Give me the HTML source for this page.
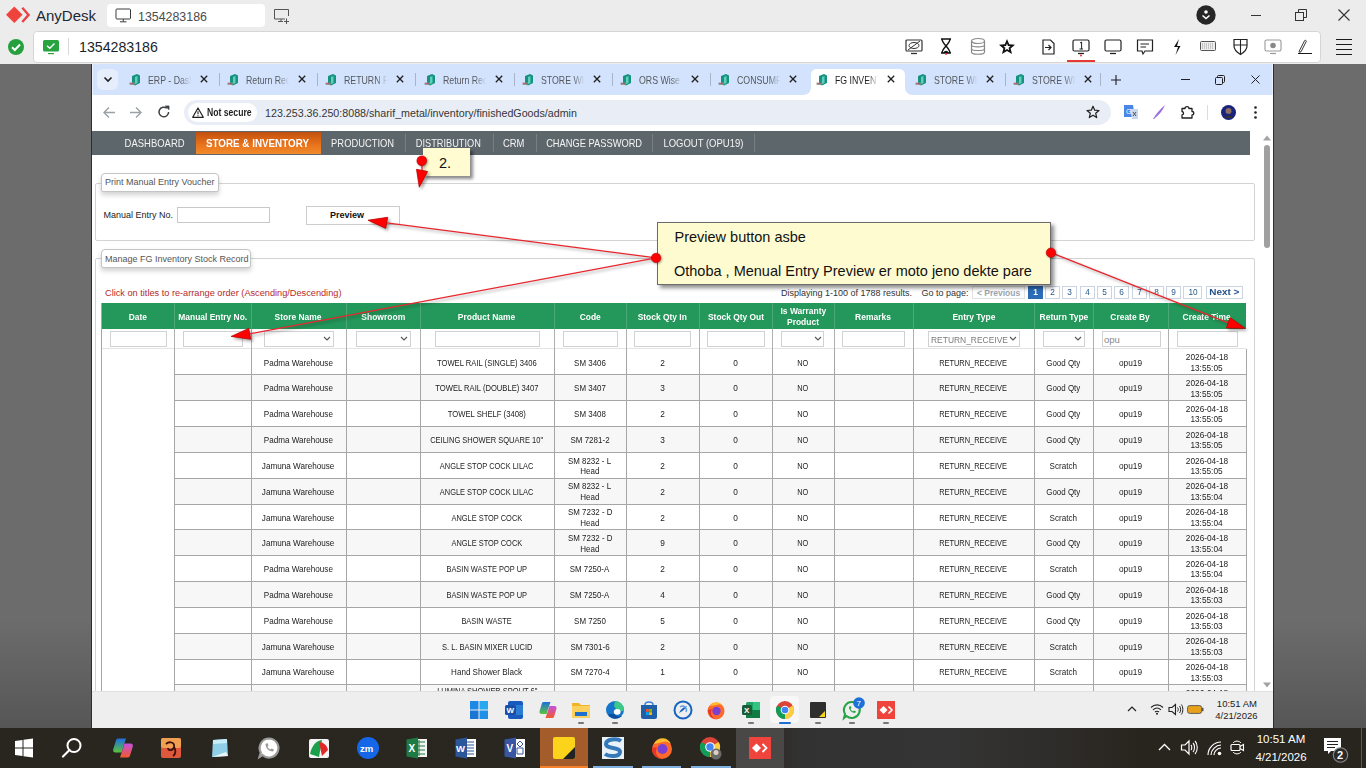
<!DOCTYPE html>
<html><head><meta charset="utf-8"><style>
*{box-sizing:border-box}
html,body{margin:0;padding:0}
body{width:1366px;height:768px;overflow:hidden;position:relative;background:linear-gradient(#6c6c6c 0,#6c6c6c 620px,#5e5e5e 690px,#565656 728px,#29261f 728px);font-family:"Liberation Sans",sans-serif;color:#222}
.a{position:absolute}
.t{position:absolute;white-space:nowrap;line-height:1}
svg{position:absolute;overflow:visible}
</style></head><body>
<div class="a" style="left:0px;top:0px;width:1366px;height:64px;background:#ececec"></div>
<svg style="left:5px;top:5px;" width="28" height="20" viewBox="0 0 28 20"><path d="M1 9.7 L9.3 1.4 L17.6 9.7 L9.3 18 Z" fill="#ef443b"/><path d="M17.3 2.8 L23.6 9.9 L17.3 17" fill="none" stroke="#e8434a" stroke-width="2.4"/></svg>
<div class="t" style="left:36px;top:7px;font-size:15px;color:#1d2736;line-height:17px">AnyDesk</div>
<div class="a" style="left:107px;top:4px;width:158px;height:23px;background:#fff;border-radius:4px"></div>
<svg style="left:115px;top:8px;" width="17" height="15" viewBox="0 0 17 15"><rect x="1" y="1" width="14.5" height="10" rx="1" fill="none" stroke="#3a3a3a" stroke-width="1"/><path d="M8.25 11 V13.5 M5 13.8 H11.5" stroke="#3a3a3a" stroke-width="1"/></svg>
<div class="t" style="left:138px;top:11px;font-size:12.4px;color:#4a4a4a;line-height:13px">1354283186</div>
<svg style="left:273px;top:8px;" width="17" height="16" viewBox="0 0 17 16"><path d="M12 11 H1.5 V1.5 H15.5 V8" fill="none" stroke="#555" stroke-width="1"/><path d="M8 11 V13.5 M5 13.5 H10 M11 13.5 h5 M13.5 10.5 v5.5" stroke="#555" stroke-width="1"/></svg>
<svg style="left:1196px;top:5px;" width="20" height="20" viewBox="0 0 20 20"><circle cx="10" cy="10" r="9.7" fill="#262626"/><circle cx="10" cy="7" r="1.8" fill="#fff"/><path d="M6.5 10.5 L10 13.5 L13.5 10.5" fill="none" stroke="#fff" stroke-width="1.6"/></svg>
<div class="a" style="left:1251px;top:15px;width:10px;height:1px;background:#333"></div>
<svg style="left:1295px;top:9px;" width="12" height="12" viewBox="0 0 12 12"><rect x="0.5" y="3.5" width="8" height="8" fill="none" stroke="#333"/><path d="M3.5 3.5 V0.5 H11.5 V8.5 H8.5" fill="none" stroke="#333"/></svg>
<svg style="left:1338px;top:9px;" width="12" height="12" viewBox="0 0 12 12"><path d="M0.5 0.5 L11.5 11.5 M11.5 0.5 L0.5 11.5" stroke="#333" stroke-width="1.1"/></svg>
<div class="a" style="left:33px;top:31px;width:1288px;height:32px;background:#fff;border:1px solid #d6d6d6;border-radius:4px"></div>
<svg style="left:8px;top:39px;" width="16" height="16" viewBox="0 0 16 16"><circle cx="8" cy="8" r="8" fill="#26a03d"/><path d="M4 8.3 L6.8 11 L12 5.5" fill="none" stroke="#fff" stroke-width="2"/></svg>
<svg style="left:43px;top:40px;" width="16" height="15" viewBox="0 0 16 15"><rect x="0" y="0" width="16" height="11.5" rx="1.5" fill="#27a33f"/><path d="M4 5.8 L6.8 8.3 L11.5 3.5" fill="none" stroke="#fff" stroke-width="1.4"/><rect x="5" y="13" width="6" height="1.2" fill="#27a33f"/></svg>
<div class="a" style="left:68px;top:38px;width:1px;height:17px;background:#d8d8d8"></div>
<div class="t" style="left:79px;top:40px;font-size:14.2px;color:#1a1f2b;line-height:15px">1354283186</div>
<svg style="left:905px;top:39px;" width="18" height="16" viewBox="0 0 18 16"><rect x="1" y="1" width="16" height="11" rx="1" fill="none" stroke="#333" stroke-width="1.2"/><ellipse cx="9" cy="6.5" rx="5" ry="3" fill="none" stroke="#333" stroke-width="1"/><path d="M3 11 L15 2" stroke="#333" stroke-width="1"/><path d="M6 14.5 H12" stroke="#333" stroke-width="1.3"/></svg>
<svg style="left:940px;top:38px;" width="12" height="17" viewBox="0 0 12 17"><path d="M1 1 H11 M1 15 H11 M2 1 C2 6 10 10 10 15 M10 1 C10 6 2 10 2 15" fill="none" stroke="#111" stroke-width="1.4"/><path d="M3 15 C5 12 7 12 9 15 Z" fill="#111"/><circle cx="6" cy="16" r="1" fill="#e33"/></svg>
<svg style="left:970px;top:38px;" width="16" height="18" viewBox="0 0 16 18"><ellipse cx="8" cy="3" rx="6.5" ry="2.5" fill="none" stroke="#888" stroke-width="1.2"/><path d="M1.5 3 V14 C1.5 17 14.5 17 14.5 14 V3 M1.5 6.7 C1.5 9.5 14.5 9.5 14.5 6.7 M1.5 10.4 C1.5 13.2 14.5 13.2 14.5 10.4" fill="none" stroke="#888" stroke-width="1.2"/></svg>
<svg style="left:998px;top:38px;" width="18" height="17" viewBox="0 0 18 17"><path d="M9 1 L11.2 6.3 L17 6.8 L12.6 10.5 L14 16 L9 13 L4 16 L5.4 10.5 L1 6.8 L6.8 6.3 Z" fill="#111"/><path d="M9 5.5 L10 8 L12.5 8.2 L10.6 9.8 L11.2 12.2 L9 10.9 L6.8 12.2 L7.4 9.8 L5.5 8.2 L8 8 Z" fill="#fff"/></svg>
<svg style="left:1042px;top:39px;" width="13" height="16" viewBox="0 0 13 16"><path d="M1 1 H8.5 L12 4.5 V15 H1 Z" fill="none" stroke="#222" stroke-width="1.2"/><path d="M3 8.5 H9 M6.5 6 L9 8.5 L6.5 11" fill="none" stroke="#222" stroke-width="1.2"/></svg>
<svg style="left:1072px;top:39px;" width="18" height="17" viewBox="0 0 18 17"><rect x="1" y="1" width="16" height="11" rx="1.5" fill="none" stroke="#222" stroke-width="1.2"/><path d="M8 4 L9.6 3 V10 M7.5 10 H11" fill="none" stroke="#222" stroke-width="1"/><path d="M6 14.5 H12" stroke="#222" stroke-width="1.3"/><circle cx="9" cy="16.5" r="1" fill="#e33"/></svg>
<div class="a" style="left:1067px;top:60px;width:28px;height:2px;background:#e53935"></div>
<svg style="left:1104px;top:39px;" width="18" height="16" viewBox="0 0 18 16"><rect x="1" y="1" width="16" height="11" rx="1.5" fill="none" stroke="#222" stroke-width="1.2"/><path d="M6 14.5 H12" stroke="#222" stroke-width="1.3"/></svg>
<svg style="left:1136px;top:39px;" width="18" height="17" viewBox="0 0 18 17"><path d="M1.5 1 H16.5 V12 H9 L7 15 L6 12 H1.5 Z" fill="none" stroke="#222" stroke-width="1.2"/><path d="M4.5 5 H13 M4.5 8 H10" stroke="#222" stroke-width="1.2"/></svg>
<svg style="left:1171px;top:38px;" width="12" height="18" viewBox="0 0 12 18"><path d="M8 1 L3 9 H7 L4.5 17 L9.5 8 H6 Z" fill="#111"/></svg>
<svg style="left:1200px;top:41px;" width="16" height="10" viewBox="0 0 16 10"><rect x="0.5" y="0.5" width="15" height="9" rx="1" fill="#eee" stroke="#555" stroke-width="1"/><path d="M2 3 H14 M2 5 H14 M2 7 H14" stroke="#888" stroke-width="0.8" stroke-dasharray="1 1"/></svg>
<svg style="left:1233px;top:38px;" width="15" height="17" viewBox="0 0 15 17"><path d="M1 1.5 H14 V8 C14 12 10 15 7.5 16.5 C5 15 1 12 1 8 Z" fill="none" stroke="#222" stroke-width="1.2"/><path d="M7.5 1.5 V16 M1 7 H14" stroke="#222" stroke-width="1.1"/></svg>
<svg style="left:1264px;top:39px;" width="18" height="16" viewBox="0 0 18 16"><rect x="1" y="1" width="16" height="11" rx="1.5" fill="none" stroke="#999" stroke-width="1.1"/><circle cx="9" cy="6.5" r="2.8" fill="#888"/><path d="M6 14.5 H12" stroke="#999" stroke-width="1.2"/></svg>
<svg style="left:1296px;top:38px;" width="18" height="17" viewBox="0 0 18 17"><path d="M3.2 13.2 L8.6 2.6 C9 1.9 10.6 2.5 10.3 3.3 L5 13.8 L3.3 14.3 Z" fill="none" stroke="#222" stroke-width="0.9"/></svg>
<div class="a" style="left:1298px;top:53px;width:14px;height:1px;background:#1a1a1a"></div>
<div class="a" style="left:1336px;top:39px;width:16px;height:1px;background:#1a1a1a"></div>
<div class="a" style="left:1336px;top:44px;width:16px;height:1px;background:#1a1a1a"></div>
<div class="a" style="left:1336px;top:49px;width:16px;height:1px;background:#1a1a1a"></div>
<div class="a" style="left:1336px;top:54px;width:16px;height:1px;background:#1a1a1a"></div>
<div class="a" style="left:91px;top:64px;width:1px;height:664px;background:#2b2f33"></div>
<div class="a" style="left:1273px;top:64px;width:1px;height:664px;background:#2b2f33"></div>
<div class="a" style="left:92px;top:64px;width:1181px;height:31px;background:#d3e3fd"></div>
<div class="a" style="left:92px;top:95px;width:1181px;height:36px;background:#fff"></div>
<div class="a" style="left:92px;top:131px;width:1181px;height:560px;background:#fff"></div>
<div class="a" style="left:97px;top:69px;width:21px;height:21px;background:#e6eefc;border-radius:6px"></div>
<svg style="left:103px;top:76px;" width="10" height="7" viewBox="0 0 10 7"><path d="M1.5 1.5 L5 5 L8.5 1.5" fill="none" stroke="#1f1f1f" stroke-width="1.6"/></svg>
<svg style="left:129.0px;top:73px;" width="12" height="13" viewBox="0 0 12 13"><path d="M3 3 L8 1 L11 2.5 V10 L6 12.5 L3 11 Z" fill="#16927f"/><path d="M6 4 L8.5 3 V10 L6 11 Z" fill="#5fd0bb"/><path d="M0.5 9.5 H6 V12 H0.5 Z" fill="#8a8a8a" opacity="0.8"/><path d="M1 10.5 H5" stroke="#c44" stroke-width="0.6"/></svg>
<div class="t" style="left:148.0px;top:75px;font-size:10.2px;color:#55595e;line-height:11px;width:52px;overflow:hidden;transform:scaleX(0.86);transform-origin:0 0;-webkit-mask-image:linear-gradient(90deg,#000 72%,transparent 97%)">ERP - Dash</div>
<svg style="left:200.0px;top:75px;" width="8" height="8" viewBox="0 0 8 8"><path d="M0.8 0.8 L7.2 7.2 M7.2 0.8 L0.8 7.2" stroke="#1f1f1f" stroke-width="1.3"/></svg>
<div class="a" style="left:219px;top:73px;width:1px;height:13px;background:#a8b4c8"></div>
<svg style="left:227.2px;top:73px;" width="12" height="13" viewBox="0 0 12 13"><path d="M3 3 L8 1 L11 2.5 V10 L6 12.5 L3 11 Z" fill="#16927f"/><path d="M6 4 L8.5 3 V10 L6 11 Z" fill="#5fd0bb"/><path d="M0.5 9.5 H6 V12 H0.5 Z" fill="#8a8a8a" opacity="0.8"/><path d="M1 10.5 H5" stroke="#c44" stroke-width="0.6"/></svg>
<div class="t" style="left:246.2px;top:75px;font-size:10.2px;color:#55595e;line-height:11px;width:52px;overflow:hidden;transform:scaleX(0.86);transform-origin:0 0;-webkit-mask-image:linear-gradient(90deg,#000 72%,transparent 97%)">Return Rec</div>
<svg style="left:298.2px;top:75px;" width="8" height="8" viewBox="0 0 8 8"><path d="M0.8 0.8 L7.2 7.2 M7.2 0.8 L0.8 7.2" stroke="#1f1f1f" stroke-width="1.3"/></svg>
<div class="a" style="left:317px;top:73px;width:1px;height:13px;background:#a8b4c8"></div>
<svg style="left:325.4px;top:73px;" width="12" height="13" viewBox="0 0 12 13"><path d="M3 3 L8 1 L11 2.5 V10 L6 12.5 L3 11 Z" fill="#16927f"/><path d="M6 4 L8.5 3 V10 L6 11 Z" fill="#5fd0bb"/><path d="M0.5 9.5 H6 V12 H0.5 Z" fill="#8a8a8a" opacity="0.8"/><path d="M1 10.5 H5" stroke="#c44" stroke-width="0.6"/></svg>
<div class="t" style="left:344.4px;top:75px;font-size:10.2px;color:#55595e;line-height:11px;width:52px;overflow:hidden;transform:scaleX(0.86);transform-origin:0 0;-webkit-mask-image:linear-gradient(90deg,#000 72%,transparent 97%)">RETURN R</div>
<svg style="left:396.4px;top:75px;" width="8" height="8" viewBox="0 0 8 8"><path d="M0.8 0.8 L7.2 7.2 M7.2 0.8 L0.8 7.2" stroke="#1f1f1f" stroke-width="1.3"/></svg>
<div class="a" style="left:415px;top:73px;width:1px;height:13px;background:#a8b4c8"></div>
<svg style="left:423.6px;top:73px;" width="12" height="13" viewBox="0 0 12 13"><path d="M3 3 L8 1 L11 2.5 V10 L6 12.5 L3 11 Z" fill="#16927f"/><path d="M6 4 L8.5 3 V10 L6 11 Z" fill="#5fd0bb"/><path d="M0.5 9.5 H6 V12 H0.5 Z" fill="#8a8a8a" opacity="0.8"/><path d="M1 10.5 H5" stroke="#c44" stroke-width="0.6"/></svg>
<div class="t" style="left:442.6px;top:75px;font-size:10.2px;color:#55595e;line-height:11px;width:52px;overflow:hidden;transform:scaleX(0.86);transform-origin:0 0;-webkit-mask-image:linear-gradient(90deg,#000 72%,transparent 97%)">Return Rec</div>
<svg style="left:494.6px;top:75px;" width="8" height="8" viewBox="0 0 8 8"><path d="M0.8 0.8 L7.2 7.2 M7.2 0.8 L0.8 7.2" stroke="#1f1f1f" stroke-width="1.3"/></svg>
<div class="a" style="left:514px;top:73px;width:1px;height:13px;background:#a8b4c8"></div>
<svg style="left:521.8px;top:73px;" width="12" height="13" viewBox="0 0 12 13"><path d="M3 3 L8 1 L11 2.5 V10 L6 12.5 L3 11 Z" fill="#16927f"/><path d="M6 4 L8.5 3 V10 L6 11 Z" fill="#5fd0bb"/><path d="M0.5 9.5 H6 V12 H0.5 Z" fill="#8a8a8a" opacity="0.8"/><path d="M1 10.5 H5" stroke="#c44" stroke-width="0.6"/></svg>
<div class="t" style="left:540.8px;top:75px;font-size:10.2px;color:#55595e;line-height:11px;width:52px;overflow:hidden;transform:scaleX(0.86);transform-origin:0 0;-webkit-mask-image:linear-gradient(90deg,#000 72%,transparent 97%)">STORE WIS</div>
<svg style="left:592.8px;top:75px;" width="8" height="8" viewBox="0 0 8 8"><path d="M0.8 0.8 L7.2 7.2 M7.2 0.8 L0.8 7.2" stroke="#1f1f1f" stroke-width="1.3"/></svg>
<div class="a" style="left:612px;top:73px;width:1px;height:13px;background:#a8b4c8"></div>
<svg style="left:620.0px;top:73px;" width="12" height="13" viewBox="0 0 12 13"><path d="M3 3 L8 1 L11 2.5 V10 L6 12.5 L3 11 Z" fill="#16927f"/><path d="M6 4 L8.5 3 V10 L6 11 Z" fill="#5fd0bb"/><path d="M0.5 9.5 H6 V12 H0.5 Z" fill="#8a8a8a" opacity="0.8"/><path d="M1 10.5 H5" stroke="#c44" stroke-width="0.6"/></svg>
<div class="t" style="left:639.0px;top:75px;font-size:10.2px;color:#55595e;line-height:11px;width:52px;overflow:hidden;transform:scaleX(0.86);transform-origin:0 0;-webkit-mask-image:linear-gradient(90deg,#000 72%,transparent 97%)">ORS Wise</div>
<svg style="left:691.0px;top:75px;" width="8" height="8" viewBox="0 0 8 8"><path d="M0.8 0.8 L7.2 7.2 M7.2 0.8 L0.8 7.2" stroke="#1f1f1f" stroke-width="1.3"/></svg>
<div class="a" style="left:710px;top:73px;width:1px;height:13px;background:#a8b4c8"></div>
<svg style="left:718.2px;top:73px;" width="12" height="13" viewBox="0 0 12 13"><path d="M3 3 L8 1 L11 2.5 V10 L6 12.5 L3 11 Z" fill="#16927f"/><path d="M6 4 L8.5 3 V10 L6 11 Z" fill="#5fd0bb"/><path d="M0.5 9.5 H6 V12 H0.5 Z" fill="#8a8a8a" opacity="0.8"/><path d="M1 10.5 H5" stroke="#c44" stroke-width="0.6"/></svg>
<div class="t" style="left:737.2px;top:75px;font-size:10.2px;color:#55595e;line-height:11px;width:52px;overflow:hidden;transform:scaleX(0.86);transform-origin:0 0;-webkit-mask-image:linear-gradient(90deg,#000 72%,transparent 97%)">CONSUMP</div>
<svg style="left:789.2px;top:75px;" width="8" height="8" viewBox="0 0 8 8"><path d="M0.8 0.8 L7.2 7.2 M7.2 0.8 L0.8 7.2" stroke="#1f1f1f" stroke-width="1.3"/></svg>
<svg style="left:803.4px;top:69px;" width="110" height="26" viewBox="0 0 110 26"><path d="M0 26 C5 26 8 23 8 18 V6 C8 2.5 10.5 0 14 0 H96 C99.5 0 102 2.5 102 6 V18 C102 23 105 26 110 26 Z" fill="#fff"/></svg>
<svg style="left:816.4px;top:73px;" width="12" height="13" viewBox="0 0 12 13"><path d="M3 3 L8 1 L11 2.5 V10 L6 12.5 L3 11 Z" fill="#16927f"/><path d="M6 4 L8.5 3 V10 L6 11 Z" fill="#5fd0bb"/><path d="M0.5 9.5 H6 V12 H0.5 Z" fill="#8a8a8a" opacity="0.8"/><path d="M1 10.5 H5" stroke="#c44" stroke-width="0.6"/></svg>
<div class="t" style="left:835.4px;top:75px;font-size:10.2px;color:#1f1f1f;line-height:11px;width:52px;overflow:hidden;transform:scaleX(0.86);transform-origin:0 0;-webkit-mask-image:linear-gradient(90deg,#000 72%,transparent 97%)">FG INVENT</div>
<svg style="left:887.4px;top:75px;" width="8" height="8" viewBox="0 0 8 8"><path d="M0.8 0.8 L7.2 7.2 M7.2 0.8 L0.8 7.2" stroke="#1f1f1f" stroke-width="1.3"/></svg>
<svg style="left:914.6px;top:73px;" width="12" height="13" viewBox="0 0 12 13"><path d="M3 3 L8 1 L11 2.5 V10 L6 12.5 L3 11 Z" fill="#16927f"/><path d="M6 4 L8.5 3 V10 L6 11 Z" fill="#5fd0bb"/><path d="M0.5 9.5 H6 V12 H0.5 Z" fill="#8a8a8a" opacity="0.8"/><path d="M1 10.5 H5" stroke="#c44" stroke-width="0.6"/></svg>
<div class="t" style="left:933.6px;top:75px;font-size:10.2px;color:#55595e;line-height:11px;width:52px;overflow:hidden;transform:scaleX(0.86);transform-origin:0 0;-webkit-mask-image:linear-gradient(90deg,#000 72%,transparent 97%)">STORE WIS</div>
<svg style="left:985.6px;top:75px;" width="8" height="8" viewBox="0 0 8 8"><path d="M0.8 0.8 L7.2 7.2 M7.2 0.8 L0.8 7.2" stroke="#1f1f1f" stroke-width="1.3"/></svg>
<div class="a" style="left:1005px;top:73px;width:1px;height:13px;background:#a8b4c8"></div>
<svg style="left:1012.8000000000001px;top:73px;" width="12" height="13" viewBox="0 0 12 13"><path d="M3 3 L8 1 L11 2.5 V10 L6 12.5 L3 11 Z" fill="#16927f"/><path d="M6 4 L8.5 3 V10 L6 11 Z" fill="#5fd0bb"/><path d="M0.5 9.5 H6 V12 H0.5 Z" fill="#8a8a8a" opacity="0.8"/><path d="M1 10.5 H5" stroke="#c44" stroke-width="0.6"/></svg>
<div class="t" style="left:1031.8000000000002px;top:75px;font-size:10.2px;color:#55595e;line-height:11px;width:52px;overflow:hidden;transform:scaleX(0.86);transform-origin:0 0;-webkit-mask-image:linear-gradient(90deg,#000 72%,transparent 97%)">STORE WIS</div>
<svg style="left:1083.8000000000002px;top:75px;" width="8" height="8" viewBox="0 0 8 8"><path d="M0.8 0.8 L7.2 7.2 M7.2 0.8 L0.8 7.2" stroke="#1f1f1f" stroke-width="1.3"/></svg>
<div class="a" style="left:1100px;top:73px;width:1px;height:13px;background:#a8b4c8"></div>
<svg style="left:1111px;top:75px;" width="10" height="10" viewBox="0 0 10 10"><path d="M5 0 V10 M0 5 H10" stroke="#1f1f1f" stroke-width="1.1"/></svg>
<div class="a" style="left:1180.5px;top:78.5px;width:9.5px;height:1px;background:#1f1f1f"></div>
<svg style="left:1215px;top:74.5px;" width="10" height="10" viewBox="0 0 10 10"><rect x="0.5" y="2.5" width="7" height="7" rx="1" fill="none" stroke="#1f1f1f" stroke-width="1"/><path d="M2.5 2.5 V1.5 C2.5 0.9 2.9 0.5 3.5 0.5 H8.5 C9.1 0.5 9.5 0.9 9.5 1.5 V6.5 C9.5 7.1 9.1 7.5 8.5 7.5 H7.5" fill="none" stroke="#1f1f1f" stroke-width="1"/></svg>
<svg style="left:1251px;top:74.5px;" width="9" height="9" viewBox="0 0 9 9"><path d="M0.5 0.5 L8.5 8.5 M8.5 0.5 L0.5 8.5" stroke="#1f1f1f" stroke-width="1"/></svg>
<div class="a" style="left:92px;top:64px;width:1px;height:31px;background:#eaf1fd"></div>
<div class="a" style="left:1272px;top:64px;width:1px;height:31px;background:#eaf1fd"></div>
<div class="a" style="left:92px;top:95px;width:1181px;height:36px;background:#fff"></div>
<svg style="left:102px;top:106px;" width="14" height="13" viewBox="0 0 14 13"><path d="M13 6.5 H2 M7 1.5 L2 6.5 L7 11.5" fill="none" stroke="#9aa0a6" stroke-width="1.4"/></svg>
<svg style="left:129px;top:106px;" width="14" height="13" viewBox="0 0 14 13"><path d="M1 6.5 H12 M7 1.5 L12 6.5 L7 11.5" fill="none" stroke="#9aa0a6" stroke-width="1.4"/></svg>
<svg style="left:157px;top:105px;" width="14" height="14" viewBox="0 0 14 14"><path d="M11.6 7 A4.8 4.8 0 1 1 9.8 3.2" fill="none" stroke="#3c4043" stroke-width="1.5"/><path d="M8.4 1 H12 V4.6 Z" fill="#3c4043" stroke="#3c4043" stroke-width="0.8"/></svg>
<div class="a" style="left:184px;top:100px;width:927px;height:25px;background:#e9eef6;border-radius:12.5px"></div>
<div class="a" style="left:188px;top:103px;width:69px;height:19px;background:#fff;border-radius:9.5px"></div>
<svg style="left:192px;top:107px;" width="12" height="11" viewBox="0 0 12 11"><path d="M6 1 L11.3 10.3 H0.7 Z" fill="none" stroke="#1f1f1f" stroke-width="1.2" stroke-linejoin="round"/><path d="M6 4.2 V7.2 M6 8.3 V9.2" stroke="#1f1f1f" stroke-width="1.1"/></svg>
<div class="t" style="left:207px;top:107px;font-size:10.4px;color:#1f1f1f;font-weight:bold;line-height:12px;transform:scaleX(0.83);transform-origin:0 0">Not secure</div>
<div class="t" style="left:265px;top:106.5px;font-size:10.7px;color:#363636;line-height:13px">123.253.36.250:8088/sharif_metal/inventory/finishedGoods/admin</div>
<svg style="left:1086px;top:105px;" width="14" height="14" viewBox="0 0 14 14"><path d="M7 1.2 L8.7 5.2 L13 5.5 L9.7 8.3 L10.7 12.6 L7 10.3 L3.3 12.6 L4.3 8.3 L1 5.5 L5.3 5.2 Z" fill="none" stroke="#1f1f1f" stroke-width="1.2" stroke-linejoin="round"/></svg>
<svg style="left:1123px;top:104px;" width="16" height="16" viewBox="0 0 16 16"><path d="M1 1 H10 L12 13 H1 Z" fill="#4a86e8"/><path d="M7 5 H15 V15 H9 Z" fill="#c8d6ee"/><text x="3" y="10" font-size="7" fill="#fff" font-family="Liberation Sans">G</text><path d="M10 8 L13 12 M13 8 L10 12" stroke="#555" stroke-width="1"/></svg>
<svg style="left:1152px;top:104px;" width="14" height="16" viewBox="0 0 14 16"><path d="M1 15 C4 10 8 5 13 1 C11 6 7 11 2 15 Z" fill="#9a6ee0"/></svg>
<svg style="left:1180px;top:105px;" width="15" height="14" viewBox="0 0 15 14"><path d="M2 3.5 H5 C5 1 9 1 9 3.5 H12 V6.5 C14.5 6.5 14.5 10 12 10 V13 H2 V10 C4 10 4 6.5 2 6.5 Z" fill="none" stroke="#1f1f1f" stroke-width="1.3" stroke-linejoin="round"/></svg>
<div class="a" style="left:1207px;top:105px;width:1px;height:15px;background:#dadce0"></div>
<svg style="left:1221px;top:105px;" width="15" height="15" viewBox="0 0 15 15"><circle cx="7.5" cy="7.5" r="7.5" fill="#1a237e"/><circle cx="7.5" cy="6" r="3" fill="#8d6e63"/><path d="M3 13 C4 9.5 11 9.5 12 13 Z" fill="#333"/></svg>
<svg style="left:1254px;top:106px;" width="3" height="13" viewBox="0 0 3 13"><circle cx="1.5" cy="1.5" r="1.3" fill="#1f1f1f"/><circle cx="1.5" cy="6.5" r="1.3" fill="#1f1f1f"/><circle cx="1.5" cy="11.5" r="1.3" fill="#1f1f1f"/></svg>
<div class="a" style="left:92px;top:131px;width:1158px;height:24px;background:#5d666b"></div>
<div class="a" style="left:196px;top:132px;width:125px;height:22px;background:linear-gradient(#c2500e,#e9741c 60%,#f08a2a)"></div>
<div class="t" style="left:122.38px;top:139.25px;width:65.25px;font-size:10.3px;line-height:10.3px;color:#f4f4f4;transform:scaleX(0.920);transform-origin:50% 50%">DASHBOARD</div>
<div class="t" style="left:327.88px;top:139.25px;width:69.24px;font-size:10.3px;line-height:10.3px;color:#f4f4f4;transform:scaleX(0.910);transform-origin:50% 50%">PRODUCTION</div>
<div class="t" style="left:412.36px;top:139.25px;width:72.67px;font-size:10.3px;line-height:10.3px;color:#f4f4f4;transform:scaleX(0.894);transform-origin:50% 50%">DISTRIBUTION</div>
<div class="t" style="left:502.27px;top:139.25px;width:23.46px;font-size:10.3px;line-height:10.3px;color:#f4f4f4;transform:scaleX(0.917);transform-origin:50% 50%">CRM</div>
<div class="t" style="left:541.37px;top:139.25px;width:106.26px;font-size:10.3px;line-height:10.3px;color:#f4f4f4;transform:scaleX(0.903);transform-origin:50% 50%">CHANGE PASSWORD</div>
<div class="t" style="left:659.90px;top:139.25px;width:86.80px;font-size:10.3px;line-height:10.3px;color:#f4f4f4;transform:scaleX(0.922);transform-origin:50% 50%">LOGOUT (OPU19)</div>
<div class="t" style="left:202.99px;top:139.30px;width:109.03px;font-size:10.4px;line-height:10.4px;color:#fff;font-weight:bold;transform:scaleX(0.945);transform-origin:50% 50%">STORE &amp; INVENTORY</div>
<div class="a" style="left:404.7px;top:134px;width:1px;height:18px;background:#768085"></div>
<div class="a" style="left:493px;top:134px;width:1px;height:18px;background:#768085"></div>
<div class="a" style="left:535.6px;top:134px;width:1px;height:18px;background:#768085"></div>
<div class="a" style="left:652.4px;top:134px;width:1px;height:18px;background:#768085"></div>
<div class="a" style="left:753.7px;top:134px;width:1px;height:18px;background:#768085"></div>
<div class="a" style="left:94.5px;top:182.5px;width:1160px;height:58px;border:1px solid #d3d3d3;border-radius:2px"></div>
<div class="a" style="left:101px;top:172.5px;width:118px;height:19px;background:#fff;border:1px solid #c4c4c4;border-radius:4px 4px 2px 2px;box-shadow:0 3px 5px rgba(0,0,0,0.18)"></div>
<div class="t" style="left:105px;top:177px;font-size:9px;color:#555;line-height:10px">Print Manual Entry Voucher</div>
<div class="t" style="left:103.5px;top:210px;font-size:9px;color:#222;line-height:10px">Manual Entry No.</div>
<div class="a" style="left:176.5px;top:206.5px;width:93px;height:16px;border:1px solid #c8c8c8;background:#fff"></div>
<div class="a" style="left:306px;top:205.5px;width:94px;height:19px;border:1px solid #cdcdcd;background:#fff"></div>
<div class="t" style="left:330px;top:210px;font-size:9px;color:#111;font-weight:bold;line-height:10px">Preview</div>
<div class="a" style="left:94.5px;top:257.6px;width:1160px;height:500px;border:1px solid #d3d3d3;border-radius:2px"></div>
<div class="a" style="left:101px;top:249px;width:150px;height:19px;background:#fff;border:1px solid #c4c4c4;border-radius:4px 4px 2px 2px;box-shadow:0 3px 5px rgba(0,0,0,0.18)"></div>
<div class="t" style="left:105px;top:253.5px;font-size:9px;color:#555;line-height:10px">Manage FG Inventory Stock Record</div>
<div class="t" style="left:105px;top:287.5px;font-size:9.2px;color:#b52a2a;line-height:10px">Click on titles to re-arrange order (Ascending/Descending)</div>
<div class="t" style="left:781px;top:288px;font-size:9px;color:#333;line-height:10px">Displaying 1-100 of 1788 results.</div>
<div class="t" style="left:921.5px;top:288px;font-size:9px;color:#333;line-height:10px">Go to page:</div>
<div class="a" style="left:972px;top:286.3px;width:53px;height:13px;border:1px solid #e2e2e2;background:#fff"></div>
<div class="t" style="left:977px;top:288px;font-size:8.5px;color:#9aa;font-weight:bold;line-height:10px;color:#9aa5b1">&lt; Previous</div>
<div class="a" style="left:1027.5px;top:286.3px;width:15px;height:13px;background:#2c6bb5"></div>
<div class="t" style="left:1032.50px;top:288.00px;width:5.00px;font-size:9px;line-height:9px;color:#fff;font-weight:bold;transform:scaleX(0.920);transform-origin:50% 50%">1</div>
<div class="a" style="left:1045px;top:286.3px;width:15px;height:13px;border:1px solid #cbd5e1;background:#fff"></div>
<div class="t" style="left:1050.00px;top:288.00px;width:5.00px;font-size:9px;line-height:9px;color:#2a5a8a;transform:scaleX(0.920);transform-origin:50% 50%">2</div>
<div class="a" style="left:1062.3px;top:286.3px;width:15px;height:13px;border:1px solid #cbd5e1;background:#fff"></div>
<div class="t" style="left:1067.30px;top:288.00px;width:5.00px;font-size:9px;line-height:9px;color:#2a5a8a;transform:scaleX(0.920);transform-origin:50% 50%">3</div>
<div class="a" style="left:1079.6px;top:286.3px;width:15px;height:13px;border:1px solid #cbd5e1;background:#fff"></div>
<div class="t" style="left:1084.60px;top:288.00px;width:5.00px;font-size:9px;line-height:9px;color:#2a5a8a;transform:scaleX(0.920);transform-origin:50% 50%">4</div>
<div class="a" style="left:1096.9px;top:286.3px;width:15px;height:13px;border:1px solid #cbd5e1;background:#fff"></div>
<div class="t" style="left:1101.90px;top:288.00px;width:5.00px;font-size:9px;line-height:9px;color:#2a5a8a;transform:scaleX(0.920);transform-origin:50% 50%">5</div>
<div class="a" style="left:1114.2px;top:286.3px;width:15px;height:13px;border:1px solid #cbd5e1;background:#fff"></div>
<div class="t" style="left:1119.20px;top:288.00px;width:5.00px;font-size:9px;line-height:9px;color:#2a5a8a;transform:scaleX(0.920);transform-origin:50% 50%">6</div>
<div class="a" style="left:1131.5px;top:286.3px;width:15px;height:13px;border:1px solid #cbd5e1;background:#fff"></div>
<div class="t" style="left:1136.50px;top:288.00px;width:5.00px;font-size:9px;line-height:9px;color:#2a5a8a;transform:scaleX(0.920);transform-origin:50% 50%">7</div>
<div class="a" style="left:1148.8px;top:286.3px;width:15px;height:13px;border:1px solid #cbd5e1;background:#fff"></div>
<div class="t" style="left:1153.80px;top:288.00px;width:5.00px;font-size:9px;line-height:9px;color:#2a5a8a;transform:scaleX(0.920);transform-origin:50% 50%">8</div>
<div class="a" style="left:1166.1px;top:286.3px;width:15px;height:13px;border:1px solid #cbd5e1;background:#fff"></div>
<div class="t" style="left:1171.10px;top:288.00px;width:5.00px;font-size:9px;line-height:9px;color:#2a5a8a;transform:scaleX(0.920);transform-origin:50% 50%">9</div>
<div class="a" style="left:1183.4px;top:286.3px;width:19px;height:13px;border:1px solid #cbd5e1;background:#fff"></div>
<div class="t" style="left:1188.00px;top:288.00px;width:10.01px;font-size:9px;line-height:9px;color:#2a5a8a;transform:scaleX(0.920);transform-origin:50% 50%">10</div>
<div class="a" style="left:1205.7px;top:286.3px;width:37.5px;height:13px;border:1px solid #cbd5e1;background:#fff"></div>
<div class="t" style="left:1211.17px;top:288.10px;width:26.66px;font-size:8.8px;line-height:8.8px;color:#1f4f88;font-weight:bold;transform:scaleX(1.125);transform-origin:50% 50%">Next &gt;</div>
<div class="a" style="left:1255px;top:131px;width:18px;height:560px;background:#fff"></div>
<svg style="left:1262px;top:134px;" width="10" height="7" viewBox="0 0 10 7"><path d="M1 6.5 L5 1.5 L9 6.5 Z" fill="#a3a3a3"/></svg>
<div class="a" style="left:1264px;top:145px;width:6px;height:103px;background:#a0a0a0;border-radius:3px"></div>
<svg style="left:1262px;top:682px;" width="10" height="7" viewBox="0 0 10 7"><path d="M1 0.5 L5 5.5 L9 0.5 Z" fill="#a3a3a3"/></svg>
<div class="a" style="left:101px;top:303px;width:1145px;height:25.69999999999999px;background:#24985a"></div>
<div class="t" style="left:127.75px;top:312.50px;width:19.51px;font-size:9px;line-height:9px;color:#fff;font-weight:bold;transform:scaleX(0.933);transform-origin:50% 50%">Date</div>
<div class="t" style="left:175.75px;top:312.50px;width:73.50px;font-size:9px;line-height:9px;color:#fff;font-weight:bold;transform:scaleX(0.936);transform-origin:50% 50%">Manual Entry No.</div>
<div class="t" style="left:273.49px;top:312.50px;width:50.02px;font-size:9px;line-height:9px;color:#fff;font-weight:bold;transform:scaleX(0.938);transform-origin:50% 50%">Store Name</div>
<div class="t" style="left:359.75px;top:312.50px;width:46.50px;font-size:9px;line-height:9px;color:#fff;font-weight:bold;transform:scaleX(0.944);transform-origin:50% 50%">Showroom</div>
<div class="t" style="left:456.49px;top:312.50px;width:61.01px;font-size:9px;line-height:9px;color:#fff;font-weight:bold;transform:scaleX(0.940);transform-origin:50% 50%">Product Name</div>
<div class="t" style="left:578.75px;top:312.50px;width:22.50px;font-size:9px;line-height:9px;color:#fff;font-weight:bold;transform:scaleX(0.936);transform-origin:50% 50%">Code</div>
<div class="t" style="left:636.25px;top:312.50px;width:52.51px;font-size:9px;line-height:9px;color:#fff;font-weight:bold;transform:scaleX(0.935);transform-origin:50% 50%">Stock Qty In</div>
<div class="t" style="left:705.50px;top:312.50px;width:60.00px;font-size:9px;line-height:9px;color:#fff;font-weight:bold;transform:scaleX(0.933);transform-origin:50% 50%">Stock Qty Out</div>
<div class="t" style="left:778.66px;top:306.80px;width:48.68px;font-size:9px;line-height:9px;color:#fff;font-weight:bold;transform:scaleX(0.939);transform-origin:50% 50%">Is Warranty</div>
<div class="t" style="left:786.00px;top:317.70px;width:34.00px;font-size:9px;line-height:9px;color:#fff;font-weight:bold;transform:scaleX(0.941);transform-origin:50% 50%">Product</div>
<div class="t" style="left:854.49px;top:312.50px;width:38.02px;font-size:9px;line-height:9px;color:#fff;font-weight:bold;transform:scaleX(0.941);transform-origin:50% 50%">Remarks</div>
<div class="t" style="left:950.58px;top:312.50px;width:45.84px;font-size:9px;line-height:9px;color:#fff;font-weight:bold;transform:scaleX(0.937);transform-origin:50% 50%">Entry Type</div>
<div class="t" style="left:1037.58px;top:312.50px;width:51.83px;font-size:9px;line-height:9px;color:#fff;font-weight:bold;transform:scaleX(0.938);transform-origin:50% 50%">Return Type</div>
<div class="t" style="left:1109.49px;top:312.50px;width:42.02px;font-size:9px;line-height:9px;color:#fff;font-weight:bold;transform:scaleX(0.935);transform-origin:50% 50%">Create By</div>
<div class="t" style="left:1181.32px;top:312.50px;width:51.36px;font-size:9px;line-height:9px;color:#fff;font-weight:bold;transform:scaleX(0.938);transform-origin:50% 50%">Create Time</div>
<div class="a" style="left:174px;top:303px;width:1px;height:25.69999999999999px;background:rgba(255,255,255,0.18)"></div>
<div class="a" style="left:251px;top:303px;width:1px;height:25.69999999999999px;background:rgba(255,255,255,0.18)"></div>
<div class="a" style="left:346px;top:303px;width:1px;height:25.69999999999999px;background:rgba(255,255,255,0.18)"></div>
<div class="a" style="left:420px;top:303px;width:1px;height:25.69999999999999px;background:rgba(255,255,255,0.18)"></div>
<div class="a" style="left:554px;top:303px;width:1px;height:25.69999999999999px;background:rgba(255,255,255,0.18)"></div>
<div class="a" style="left:626px;top:303px;width:1px;height:25.69999999999999px;background:rgba(255,255,255,0.18)"></div>
<div class="a" style="left:699px;top:303px;width:1px;height:25.69999999999999px;background:rgba(255,255,255,0.18)"></div>
<div class="a" style="left:772px;top:303px;width:1px;height:25.69999999999999px;background:rgba(255,255,255,0.18)"></div>
<div class="a" style="left:834px;top:303px;width:1px;height:25.69999999999999px;background:rgba(255,255,255,0.18)"></div>
<div class="a" style="left:913px;top:303px;width:1px;height:25.69999999999999px;background:rgba(255,255,255,0.18)"></div>
<div class="a" style="left:1034px;top:303px;width:1px;height:25.69999999999999px;background:rgba(255,255,255,0.18)"></div>
<div class="a" style="left:1093px;top:303px;width:1px;height:25.69999999999999px;background:rgba(255,255,255,0.18)"></div>
<div class="a" style="left:1168px;top:303px;width:1px;height:25.69999999999999px;background:rgba(255,255,255,0.18)"></div>
<div class="a" style="left:101px;top:328.7px;width:1145px;height:19.900000000000034px;background:#fff;border-bottom:1px solid #e4e4e4"></div>
<div class="a" style="left:174px;top:328.7px;width:1px;height:19.900000000000034px;background:#b0b0b0"></div>
<div class="a" style="left:251px;top:328.7px;width:1px;height:19.900000000000034px;background:#b0b0b0"></div>
<div class="a" style="left:346px;top:328.7px;width:1px;height:19.900000000000034px;background:#b0b0b0"></div>
<div class="a" style="left:420px;top:328.7px;width:1px;height:19.900000000000034px;background:#b0b0b0"></div>
<div class="a" style="left:554px;top:328.7px;width:1px;height:19.900000000000034px;background:#b0b0b0"></div>
<div class="a" style="left:626px;top:328.7px;width:1px;height:19.900000000000034px;background:#b0b0b0"></div>
<div class="a" style="left:699px;top:328.7px;width:1px;height:19.900000000000034px;background:#b0b0b0"></div>
<div class="a" style="left:772px;top:328.7px;width:1px;height:19.900000000000034px;background:#b0b0b0"></div>
<div class="a" style="left:834px;top:328.7px;width:1px;height:19.900000000000034px;background:#b0b0b0"></div>
<div class="a" style="left:913px;top:328.7px;width:1px;height:19.900000000000034px;background:#b0b0b0"></div>
<div class="a" style="left:1034px;top:328.7px;width:1px;height:19.900000000000034px;background:#b0b0b0"></div>
<div class="a" style="left:1093px;top:328.7px;width:1px;height:19.900000000000034px;background:#b0b0b0"></div>
<div class="a" style="left:1168px;top:328.7px;width:1px;height:19.900000000000034px;background:#b0b0b0"></div>
<div class="a" style="left:109.5px;top:331px;width:57.099999999999994px;height:16px;border:1px solid #d2d2d2;background:#fff"></div>
<div class="a" style="left:182.5px;top:331px;width:60.5px;height:16px;border:1px solid #d2d2d2;background:#fff"></div>
<div class="a" style="left:263.6px;top:331px;width:70.39999999999998px;height:16px;border:1px solid #d2d2d2;background:#fff"></div>
<svg style="left:323px;top:336px;" width="8" height="6" viewBox="0 0 8 6"><path d="M1 1 L4 4 L7 1" fill="none" stroke="#555" stroke-width="1.1"/></svg>
<div class="a" style="left:356.4px;top:331px;width:54.30000000000001px;height:16px;border:1px solid #d2d2d2;background:#fff"></div>
<svg style="left:399.7px;top:336px;" width="8" height="6" viewBox="0 0 8 6"><path d="M1 1 L4 4 L7 1" fill="none" stroke="#555" stroke-width="1.1"/></svg>
<div class="a" style="left:434.6px;top:331px;width:105.10000000000002px;height:16px;border:1px solid #d2d2d2;background:#fff"></div>
<div class="a" style="left:562.5px;top:331px;width:55.5px;height:16px;border:1px solid #d2d2d2;background:#fff"></div>
<div class="a" style="left:634px;top:331px;width:57.39999999999998px;height:16px;border:1px solid #d2d2d2;background:#fff"></div>
<div class="a" style="left:706.9px;top:331px;width:57.700000000000045px;height:16px;border:1px solid #d2d2d2;background:#fff"></div>
<div class="a" style="left:781.2px;top:331px;width:43.299999999999955px;height:16px;border:1px solid #d2d2d2;background:#fff"></div>
<svg style="left:813.5px;top:336px;" width="8" height="6" viewBox="0 0 8 6"><path d="M1 1 L4 4 L7 1" fill="none" stroke="#555" stroke-width="1.1"/></svg>
<div class="a" style="left:842.4px;top:331px;width:62.5px;height:16px;border:1px solid #d2d2d2;background:#fff"></div>
<div class="a" style="left:928px;top:331px;width:91.5px;height:16px;border:1px solid #d2d2d2;background:#fff"></div>
<svg style="left:1008.5px;top:336px;" width="8" height="6" viewBox="0 0 8 6"><path d="M1 1 L4 4 L7 1" fill="none" stroke="#555" stroke-width="1.1"/></svg>
<div class="a" style="left:1043.3px;top:331px;width:42.100000000000136px;height:16px;border:1px solid #d2d2d2;background:#fff"></div>
<svg style="left:1074.4px;top:336px;" width="8" height="6" viewBox="0 0 8 6"><path d="M1 1 L4 4 L7 1" fill="none" stroke="#555" stroke-width="1.1"/></svg>
<div class="a" style="left:1102px;top:331px;width:58.5px;height:16px;border:1px solid #d2d2d2;background:#fff"></div>
<div class="a" style="left:1176.8px;top:331px;width:61.700000000000045px;height:16px;border:1px solid #d2d2d2;background:#fff"></div>
<div class="t" style="left:930.5px;top:334.5px;font-size:9.4px;color:#7a7a7a;line-height:10px;transform:scaleX(0.9);transform-origin:0 0;width:86px;overflow:hidden">RETURN_RECEIVE</div>
<div class="t" style="left:1104px;top:334.5px;font-size:9.5px;color:#888;line-height:10px">opu</div>
<div class="a" style="left:174px;top:374px;width:1072px;height:1px;background:#a6a6a6"></div>
<div class="t" style="left:260.15px;top:358.52px;width:76.70px;font-size:9px;line-height:9px;color:#222;transform:scaleX(0.901);transform-origin:50% 50%">Padma Warehouse</div>
<div class="t" style="left:428.15px;top:358.52px;width:117.70px;font-size:9px;line-height:9px;color:#222;transform:scaleX(0.848);transform-origin:50% 50%">TOWEL RAIL (SINGLE) 3406</div>
<div class="t" style="left:571.99px;top:358.52px;width:36.02px;font-size:9px;line-height:9px;color:#222;transform:scaleX(0.883);transform-origin:50% 50%">SM 3406</div>
<div class="t" style="left:660.00px;top:358.52px;width:5.00px;font-size:9px;line-height:9px;color:#222;transform:scaleX(0.920);transform-origin:50% 50%">2</div>
<div class="t" style="left:733.00px;top:358.52px;width:5.00px;font-size:9px;line-height:9px;color:#222;transform:scaleX(0.920);transform-origin:50% 50%">0</div>
<div class="t" style="left:796.25px;top:358.52px;width:13.50px;font-size:9px;line-height:9px;color:#222;transform:scaleX(0.820);transform-origin:50% 50%">NO</div>
<div class="t" style="left:932.49px;top:358.52px;width:82.02px;font-size:9px;line-height:9px;color:#222;transform:scaleX(0.826);transform-origin:50% 50%">RETURN_RECEIVE</div>
<div class="t" style="left:1044.24px;top:358.52px;width:38.52px;font-size:9px;line-height:9px;color:#222;transform:scaleX(0.884);transform-origin:50% 50%">Good Qty</div>
<div class="t" style="left:1117.99px;top:358.52px;width:25.02px;font-size:9px;line-height:9px;color:#222;transform:scaleX(0.920);transform-origin:50% 50%">opu19</div>
<div class="t" style="left:1183.98px;top:353.32px;width:46.03px;font-size:9px;line-height:9px;color:#222;transform:scaleX(0.920);transform-origin:50% 50%">2026-04-18</div>
<div class="t" style="left:1189.49px;top:363.72px;width:35.03px;font-size:9px;line-height:9px;color:#222;transform:scaleX(0.920);transform-origin:50% 50%">13:55:05</div>
<div class="a" style="left:174px;top:375px;width:1072px;height:26px;background:#f7f7f7"></div>
<div class="a" style="left:174px;top:400px;width:1072px;height:1px;background:#a6a6a6"></div>
<div class="t" style="left:260.15px;top:384.35px;width:76.70px;font-size:9px;line-height:9px;color:#222;transform:scaleX(0.901);transform-origin:50% 50%">Padma Warehouse</div>
<div class="t" style="left:426.15px;top:384.35px;width:121.70px;font-size:9px;line-height:9px;color:#222;transform:scaleX(0.847);transform-origin:50% 50%">TOWEL RAIL (DOUBLE) 3407</div>
<div class="t" style="left:571.99px;top:384.35px;width:36.02px;font-size:9px;line-height:9px;color:#222;transform:scaleX(0.883);transform-origin:50% 50%">SM 3407</div>
<div class="t" style="left:660.00px;top:384.35px;width:5.00px;font-size:9px;line-height:9px;color:#222;transform:scaleX(0.920);transform-origin:50% 50%">3</div>
<div class="t" style="left:733.00px;top:384.35px;width:5.00px;font-size:9px;line-height:9px;color:#222;transform:scaleX(0.920);transform-origin:50% 50%">0</div>
<div class="t" style="left:796.25px;top:384.35px;width:13.50px;font-size:9px;line-height:9px;color:#222;transform:scaleX(0.820);transform-origin:50% 50%">NO</div>
<div class="t" style="left:932.49px;top:384.35px;width:82.02px;font-size:9px;line-height:9px;color:#222;transform:scaleX(0.826);transform-origin:50% 50%">RETURN_RECEIVE</div>
<div class="t" style="left:1044.24px;top:384.35px;width:38.52px;font-size:9px;line-height:9px;color:#222;transform:scaleX(0.884);transform-origin:50% 50%">Good Qty</div>
<div class="t" style="left:1117.99px;top:384.35px;width:25.02px;font-size:9px;line-height:9px;color:#222;transform:scaleX(0.920);transform-origin:50% 50%">opu19</div>
<div class="t" style="left:1183.98px;top:379.15px;width:46.03px;font-size:9px;line-height:9px;color:#222;transform:scaleX(0.920);transform-origin:50% 50%">2026-04-18</div>
<div class="t" style="left:1189.49px;top:389.55px;width:35.03px;font-size:9px;line-height:9px;color:#222;transform:scaleX(0.920);transform-origin:50% 50%">13:55:05</div>
<div class="a" style="left:174px;top:426px;width:1072px;height:1px;background:#a6a6a6"></div>
<div class="t" style="left:260.15px;top:410.18px;width:76.70px;font-size:9px;line-height:9px;color:#222;transform:scaleX(0.901);transform-origin:50% 50%">Padma Warehouse</div>
<div class="t" style="left:441.24px;top:410.18px;width:91.53px;font-size:9px;line-height:9px;color:#222;transform:scaleX(0.853);transform-origin:50% 50%">TOWEL SHELF (3408)</div>
<div class="t" style="left:571.99px;top:410.18px;width:36.02px;font-size:9px;line-height:9px;color:#222;transform:scaleX(0.883);transform-origin:50% 50%">SM 3408</div>
<div class="t" style="left:660.00px;top:410.18px;width:5.00px;font-size:9px;line-height:9px;color:#222;transform:scaleX(0.920);transform-origin:50% 50%">2</div>
<div class="t" style="left:733.00px;top:410.18px;width:5.00px;font-size:9px;line-height:9px;color:#222;transform:scaleX(0.920);transform-origin:50% 50%">0</div>
<div class="t" style="left:796.25px;top:410.18px;width:13.50px;font-size:9px;line-height:9px;color:#222;transform:scaleX(0.820);transform-origin:50% 50%">NO</div>
<div class="t" style="left:932.49px;top:410.18px;width:82.02px;font-size:9px;line-height:9px;color:#222;transform:scaleX(0.826);transform-origin:50% 50%">RETURN_RECEIVE</div>
<div class="t" style="left:1044.24px;top:410.18px;width:38.52px;font-size:9px;line-height:9px;color:#222;transform:scaleX(0.884);transform-origin:50% 50%">Good Qty</div>
<div class="t" style="left:1117.99px;top:410.18px;width:25.02px;font-size:9px;line-height:9px;color:#222;transform:scaleX(0.920);transform-origin:50% 50%">opu19</div>
<div class="t" style="left:1183.98px;top:404.98px;width:46.03px;font-size:9px;line-height:9px;color:#222;transform:scaleX(0.920);transform-origin:50% 50%">2026-04-18</div>
<div class="t" style="left:1189.49px;top:415.38px;width:35.03px;font-size:9px;line-height:9px;color:#222;transform:scaleX(0.920);transform-origin:50% 50%">13:55:05</div>
<div class="a" style="left:174px;top:427px;width:1072px;height:26px;background:#f7f7f7"></div>
<div class="a" style="left:174px;top:452px;width:1072px;height:1px;background:#a6a6a6"></div>
<div class="t" style="left:260.15px;top:436.01px;width:76.70px;font-size:9px;line-height:9px;color:#222;transform:scaleX(0.901);transform-origin:50% 50%">Padma Warehouse</div>
<div class="t" style="left:419.39px;top:436.01px;width:135.22px;font-size:9px;line-height:9px;color:#222;transform:scaleX(0.835);transform-origin:50% 50%">CEILING SHOWER SQUARE 10&quot;</div>
<div class="t" style="left:567.99px;top:436.01px;width:44.02px;font-size:9px;line-height:9px;color:#222;transform:scaleX(0.889);transform-origin:50% 50%">SM 7281-2</div>
<div class="t" style="left:660.00px;top:436.01px;width:5.00px;font-size:9px;line-height:9px;color:#222;transform:scaleX(0.920);transform-origin:50% 50%">3</div>
<div class="t" style="left:733.00px;top:436.01px;width:5.00px;font-size:9px;line-height:9px;color:#222;transform:scaleX(0.920);transform-origin:50% 50%">0</div>
<div class="t" style="left:796.25px;top:436.01px;width:13.50px;font-size:9px;line-height:9px;color:#222;transform:scaleX(0.820);transform-origin:50% 50%">NO</div>
<div class="t" style="left:932.49px;top:436.01px;width:82.02px;font-size:9px;line-height:9px;color:#222;transform:scaleX(0.826);transform-origin:50% 50%">RETURN_RECEIVE</div>
<div class="t" style="left:1044.24px;top:436.01px;width:38.52px;font-size:9px;line-height:9px;color:#222;transform:scaleX(0.884);transform-origin:50% 50%">Good Qty</div>
<div class="t" style="left:1117.99px;top:436.01px;width:25.02px;font-size:9px;line-height:9px;color:#222;transform:scaleX(0.920);transform-origin:50% 50%">opu19</div>
<div class="t" style="left:1183.98px;top:430.81px;width:46.03px;font-size:9px;line-height:9px;color:#222;transform:scaleX(0.920);transform-origin:50% 50%">2026-04-18</div>
<div class="t" style="left:1189.49px;top:441.21px;width:35.03px;font-size:9px;line-height:9px;color:#222;transform:scaleX(0.920);transform-origin:50% 50%">13:55:05</div>
<div class="a" style="left:174px;top:478px;width:1072px;height:1px;background:#a6a6a6"></div>
<div class="t" style="left:258.40px;top:461.84px;width:80.20px;font-size:9px;line-height:9px;color:#222;transform:scaleX(0.904);transform-origin:50% 50%">Jamuna Warehouse</div>
<div class="t" style="left:430.40px;top:461.84px;width:113.21px;font-size:9px;line-height:9px;color:#222;transform:scaleX(0.826);transform-origin:50% 50%">ANGLE STOP COCK LILAC</div>
<div class="t" style="left:565.49px;top:456.64px;width:49.02px;font-size:9px;line-height:9px;color:#222;transform:scaleX(0.882);transform-origin:50% 50%">SM 8232 - L</div>
<div class="t" style="left:579.24px;top:467.04px;width:21.51px;font-size:9px;line-height:9px;color:#222;transform:scaleX(0.890);transform-origin:50% 50%">Head</div>
<div class="t" style="left:660.00px;top:461.84px;width:5.00px;font-size:9px;line-height:9px;color:#222;transform:scaleX(0.920);transform-origin:50% 50%">2</div>
<div class="t" style="left:733.00px;top:461.84px;width:5.00px;font-size:9px;line-height:9px;color:#222;transform:scaleX(0.920);transform-origin:50% 50%">0</div>
<div class="t" style="left:796.25px;top:461.84px;width:13.50px;font-size:9px;line-height:9px;color:#222;transform:scaleX(0.820);transform-origin:50% 50%">NO</div>
<div class="t" style="left:932.49px;top:461.84px;width:82.02px;font-size:9px;line-height:9px;color:#222;transform:scaleX(0.826);transform-origin:50% 50%">RETURN_RECEIVE</div>
<div class="t" style="left:1048.24px;top:461.84px;width:30.51px;font-size:9px;line-height:9px;color:#222;transform:scaleX(0.900);transform-origin:50% 50%">Scratch</div>
<div class="t" style="left:1117.99px;top:461.84px;width:25.02px;font-size:9px;line-height:9px;color:#222;transform:scaleX(0.920);transform-origin:50% 50%">opu19</div>
<div class="t" style="left:1183.98px;top:456.64px;width:46.03px;font-size:9px;line-height:9px;color:#222;transform:scaleX(0.920);transform-origin:50% 50%">2026-04-18</div>
<div class="t" style="left:1189.49px;top:467.04px;width:35.03px;font-size:9px;line-height:9px;color:#222;transform:scaleX(0.920);transform-origin:50% 50%">13:55:05</div>
<div class="a" style="left:174px;top:479px;width:1072px;height:26px;background:#f7f7f7"></div>
<div class="a" style="left:174px;top:504px;width:1072px;height:1px;background:#a6a6a6"></div>
<div class="t" style="left:258.40px;top:487.67px;width:80.20px;font-size:9px;line-height:9px;color:#222;transform:scaleX(0.904);transform-origin:50% 50%">Jamuna Warehouse</div>
<div class="t" style="left:430.40px;top:487.67px;width:113.21px;font-size:9px;line-height:9px;color:#222;transform:scaleX(0.826);transform-origin:50% 50%">ANGLE STOP COCK LILAC</div>
<div class="t" style="left:565.49px;top:482.47px;width:49.02px;font-size:9px;line-height:9px;color:#222;transform:scaleX(0.882);transform-origin:50% 50%">SM 8232 - L</div>
<div class="t" style="left:579.24px;top:492.87px;width:21.51px;font-size:9px;line-height:9px;color:#222;transform:scaleX(0.890);transform-origin:50% 50%">Head</div>
<div class="t" style="left:660.00px;top:487.67px;width:5.00px;font-size:9px;line-height:9px;color:#222;transform:scaleX(0.920);transform-origin:50% 50%">2</div>
<div class="t" style="left:733.00px;top:487.67px;width:5.00px;font-size:9px;line-height:9px;color:#222;transform:scaleX(0.920);transform-origin:50% 50%">0</div>
<div class="t" style="left:796.25px;top:487.67px;width:13.50px;font-size:9px;line-height:9px;color:#222;transform:scaleX(0.820);transform-origin:50% 50%">NO</div>
<div class="t" style="left:932.49px;top:487.67px;width:82.02px;font-size:9px;line-height:9px;color:#222;transform:scaleX(0.826);transform-origin:50% 50%">RETURN_RECEIVE</div>
<div class="t" style="left:1044.24px;top:487.67px;width:38.52px;font-size:9px;line-height:9px;color:#222;transform:scaleX(0.884);transform-origin:50% 50%">Good Qty</div>
<div class="t" style="left:1117.99px;top:487.67px;width:25.02px;font-size:9px;line-height:9px;color:#222;transform:scaleX(0.920);transform-origin:50% 50%">opu19</div>
<div class="t" style="left:1183.98px;top:482.47px;width:46.03px;font-size:9px;line-height:9px;color:#222;transform:scaleX(0.920);transform-origin:50% 50%">2026-04-18</div>
<div class="t" style="left:1189.49px;top:492.87px;width:35.03px;font-size:9px;line-height:9px;color:#222;transform:scaleX(0.920);transform-origin:50% 50%">13:55:04</div>
<div class="a" style="left:174px;top:529px;width:1072px;height:1px;background:#a6a6a6"></div>
<div class="t" style="left:258.40px;top:513.50px;width:80.20px;font-size:9px;line-height:9px;color:#222;transform:scaleX(0.904);transform-origin:50% 50%">Jamuna Warehouse</div>
<div class="t" style="left:444.15px;top:513.50px;width:85.69px;font-size:9px;line-height:9px;color:#222;transform:scaleX(0.825);transform-origin:50% 50%">ANGLE STOP COCK</div>
<div class="t" style="left:564.74px;top:508.29px;width:50.52px;font-size:9px;line-height:9px;color:#222;transform:scaleX(0.880);transform-origin:50% 50%">SM 7232 - D</div>
<div class="t" style="left:579.24px;top:518.70px;width:21.51px;font-size:9px;line-height:9px;color:#222;transform:scaleX(0.890);transform-origin:50% 50%">Head</div>
<div class="t" style="left:660.00px;top:513.50px;width:5.00px;font-size:9px;line-height:9px;color:#222;transform:scaleX(0.920);transform-origin:50% 50%">2</div>
<div class="t" style="left:733.00px;top:513.50px;width:5.00px;font-size:9px;line-height:9px;color:#222;transform:scaleX(0.920);transform-origin:50% 50%">0</div>
<div class="t" style="left:796.25px;top:513.50px;width:13.50px;font-size:9px;line-height:9px;color:#222;transform:scaleX(0.820);transform-origin:50% 50%">NO</div>
<div class="t" style="left:932.49px;top:513.50px;width:82.02px;font-size:9px;line-height:9px;color:#222;transform:scaleX(0.826);transform-origin:50% 50%">RETURN_RECEIVE</div>
<div class="t" style="left:1048.24px;top:513.50px;width:30.51px;font-size:9px;line-height:9px;color:#222;transform:scaleX(0.900);transform-origin:50% 50%">Scratch</div>
<div class="t" style="left:1117.99px;top:513.50px;width:25.02px;font-size:9px;line-height:9px;color:#222;transform:scaleX(0.920);transform-origin:50% 50%">opu19</div>
<div class="t" style="left:1183.98px;top:508.29px;width:46.03px;font-size:9px;line-height:9px;color:#222;transform:scaleX(0.920);transform-origin:50% 50%">2026-04-18</div>
<div class="t" style="left:1189.49px;top:518.70px;width:35.03px;font-size:9px;line-height:9px;color:#222;transform:scaleX(0.920);transform-origin:50% 50%">13:55:04</div>
<div class="a" style="left:174px;top:530px;width:1072px;height:26px;background:#f7f7f7"></div>
<div class="a" style="left:174px;top:555px;width:1072px;height:1px;background:#a6a6a6"></div>
<div class="t" style="left:258.40px;top:539.33px;width:80.20px;font-size:9px;line-height:9px;color:#222;transform:scaleX(0.904);transform-origin:50% 50%">Jamuna Warehouse</div>
<div class="t" style="left:444.15px;top:539.33px;width:85.69px;font-size:9px;line-height:9px;color:#222;transform:scaleX(0.825);transform-origin:50% 50%">ANGLE STOP COCK</div>
<div class="t" style="left:564.74px;top:534.12px;width:50.52px;font-size:9px;line-height:9px;color:#222;transform:scaleX(0.880);transform-origin:50% 50%">SM 7232 - D</div>
<div class="t" style="left:579.24px;top:544.53px;width:21.51px;font-size:9px;line-height:9px;color:#222;transform:scaleX(0.890);transform-origin:50% 50%">Head</div>
<div class="t" style="left:660.00px;top:539.33px;width:5.00px;font-size:9px;line-height:9px;color:#222;transform:scaleX(0.920);transform-origin:50% 50%">9</div>
<div class="t" style="left:733.00px;top:539.33px;width:5.00px;font-size:9px;line-height:9px;color:#222;transform:scaleX(0.920);transform-origin:50% 50%">0</div>
<div class="t" style="left:796.25px;top:539.33px;width:13.50px;font-size:9px;line-height:9px;color:#222;transform:scaleX(0.820);transform-origin:50% 50%">NO</div>
<div class="t" style="left:932.49px;top:539.33px;width:82.02px;font-size:9px;line-height:9px;color:#222;transform:scaleX(0.826);transform-origin:50% 50%">RETURN_RECEIVE</div>
<div class="t" style="left:1044.24px;top:539.33px;width:38.52px;font-size:9px;line-height:9px;color:#222;transform:scaleX(0.884);transform-origin:50% 50%">Good Qty</div>
<div class="t" style="left:1117.99px;top:539.33px;width:25.02px;font-size:9px;line-height:9px;color:#222;transform:scaleX(0.920);transform-origin:50% 50%">opu19</div>
<div class="t" style="left:1183.98px;top:534.12px;width:46.03px;font-size:9px;line-height:9px;color:#222;transform:scaleX(0.920);transform-origin:50% 50%">2026-04-18</div>
<div class="t" style="left:1189.49px;top:544.53px;width:35.03px;font-size:9px;line-height:9px;color:#222;transform:scaleX(0.920);transform-origin:50% 50%">13:55:04</div>
<div class="a" style="left:174px;top:581px;width:1072px;height:1px;background:#a6a6a6"></div>
<div class="t" style="left:260.15px;top:565.15px;width:76.70px;font-size:9px;line-height:9px;color:#222;transform:scaleX(0.901);transform-origin:50% 50%">Padma Warehouse</div>
<div class="t" style="left:438.24px;top:565.15px;width:97.53px;font-size:9px;line-height:9px;color:#222;transform:scaleX(0.827);transform-origin:50% 50%">BASIN WASTE POP UP</div>
<div class="t" style="left:567.49px;top:565.15px;width:45.02px;font-size:9px;line-height:9px;color:#222;transform:scaleX(0.877);transform-origin:50% 50%">SM 7250-A</div>
<div class="t" style="left:660.00px;top:565.15px;width:5.00px;font-size:9px;line-height:9px;color:#222;transform:scaleX(0.920);transform-origin:50% 50%">2</div>
<div class="t" style="left:733.00px;top:565.15px;width:5.00px;font-size:9px;line-height:9px;color:#222;transform:scaleX(0.920);transform-origin:50% 50%">0</div>
<div class="t" style="left:796.25px;top:565.15px;width:13.50px;font-size:9px;line-height:9px;color:#222;transform:scaleX(0.820);transform-origin:50% 50%">NO</div>
<div class="t" style="left:932.49px;top:565.15px;width:82.02px;font-size:9px;line-height:9px;color:#222;transform:scaleX(0.826);transform-origin:50% 50%">RETURN_RECEIVE</div>
<div class="t" style="left:1048.24px;top:565.15px;width:30.51px;font-size:9px;line-height:9px;color:#222;transform:scaleX(0.900);transform-origin:50% 50%">Scratch</div>
<div class="t" style="left:1117.99px;top:565.15px;width:25.02px;font-size:9px;line-height:9px;color:#222;transform:scaleX(0.920);transform-origin:50% 50%">opu19</div>
<div class="t" style="left:1183.98px;top:559.95px;width:46.03px;font-size:9px;line-height:9px;color:#222;transform:scaleX(0.920);transform-origin:50% 50%">2026-04-18</div>
<div class="t" style="left:1189.49px;top:570.36px;width:35.03px;font-size:9px;line-height:9px;color:#222;transform:scaleX(0.920);transform-origin:50% 50%">13:55:04</div>
<div class="a" style="left:174px;top:582px;width:1072px;height:26px;background:#f7f7f7"></div>
<div class="a" style="left:174px;top:607px;width:1072px;height:1px;background:#a6a6a6"></div>
<div class="t" style="left:260.15px;top:590.98px;width:76.70px;font-size:9px;line-height:9px;color:#222;transform:scaleX(0.901);transform-origin:50% 50%">Padma Warehouse</div>
<div class="t" style="left:438.24px;top:590.98px;width:97.53px;font-size:9px;line-height:9px;color:#222;transform:scaleX(0.827);transform-origin:50% 50%">BASIN WASTE POP UP</div>
<div class="t" style="left:567.49px;top:590.98px;width:45.02px;font-size:9px;line-height:9px;color:#222;transform:scaleX(0.877);transform-origin:50% 50%">SM 7250-A</div>
<div class="t" style="left:660.00px;top:590.98px;width:5.00px;font-size:9px;line-height:9px;color:#222;transform:scaleX(0.920);transform-origin:50% 50%">4</div>
<div class="t" style="left:733.00px;top:590.98px;width:5.00px;font-size:9px;line-height:9px;color:#222;transform:scaleX(0.920);transform-origin:50% 50%">0</div>
<div class="t" style="left:796.25px;top:590.98px;width:13.50px;font-size:9px;line-height:9px;color:#222;transform:scaleX(0.820);transform-origin:50% 50%">NO</div>
<div class="t" style="left:932.49px;top:590.98px;width:82.02px;font-size:9px;line-height:9px;color:#222;transform:scaleX(0.826);transform-origin:50% 50%">RETURN_RECEIVE</div>
<div class="t" style="left:1044.24px;top:590.98px;width:38.52px;font-size:9px;line-height:9px;color:#222;transform:scaleX(0.884);transform-origin:50% 50%">Good Qty</div>
<div class="t" style="left:1117.99px;top:590.98px;width:25.02px;font-size:9px;line-height:9px;color:#222;transform:scaleX(0.920);transform-origin:50% 50%">opu19</div>
<div class="t" style="left:1183.98px;top:585.78px;width:46.03px;font-size:9px;line-height:9px;color:#222;transform:scaleX(0.920);transform-origin:50% 50%">2026-04-18</div>
<div class="t" style="left:1189.49px;top:596.18px;width:35.03px;font-size:9px;line-height:9px;color:#222;transform:scaleX(0.920);transform-origin:50% 50%">13:55:03</div>
<div class="a" style="left:174px;top:633px;width:1072px;height:1px;background:#a6a6a6"></div>
<div class="t" style="left:260.15px;top:616.81px;width:76.70px;font-size:9px;line-height:9px;color:#222;transform:scaleX(0.901);transform-origin:50% 50%">Padma Warehouse</div>
<div class="t" style="left:456.41px;top:616.81px;width:61.18px;font-size:9px;line-height:9px;color:#222;transform:scaleX(0.824);transform-origin:50% 50%">BASIN WASTE</div>
<div class="t" style="left:571.99px;top:616.81px;width:36.02px;font-size:9px;line-height:9px;color:#222;transform:scaleX(0.883);transform-origin:50% 50%">SM 7250</div>
<div class="t" style="left:660.00px;top:616.81px;width:5.00px;font-size:9px;line-height:9px;color:#222;transform:scaleX(0.920);transform-origin:50% 50%">5</div>
<div class="t" style="left:733.00px;top:616.81px;width:5.00px;font-size:9px;line-height:9px;color:#222;transform:scaleX(0.920);transform-origin:50% 50%">0</div>
<div class="t" style="left:796.25px;top:616.81px;width:13.50px;font-size:9px;line-height:9px;color:#222;transform:scaleX(0.820);transform-origin:50% 50%">NO</div>
<div class="t" style="left:932.49px;top:616.81px;width:82.02px;font-size:9px;line-height:9px;color:#222;transform:scaleX(0.826);transform-origin:50% 50%">RETURN_RECEIVE</div>
<div class="t" style="left:1044.24px;top:616.81px;width:38.52px;font-size:9px;line-height:9px;color:#222;transform:scaleX(0.884);transform-origin:50% 50%">Good Qty</div>
<div class="t" style="left:1117.99px;top:616.81px;width:25.02px;font-size:9px;line-height:9px;color:#222;transform:scaleX(0.920);transform-origin:50% 50%">opu19</div>
<div class="t" style="left:1183.98px;top:611.61px;width:46.03px;font-size:9px;line-height:9px;color:#222;transform:scaleX(0.920);transform-origin:50% 50%">2026-04-18</div>
<div class="t" style="left:1189.49px;top:622.01px;width:35.03px;font-size:9px;line-height:9px;color:#222;transform:scaleX(0.920);transform-origin:50% 50%">13:55:03</div>
<div class="a" style="left:174px;top:634px;width:1072px;height:26px;background:#f7f7f7"></div>
<div class="a" style="left:174px;top:659px;width:1072px;height:1px;background:#a6a6a6"></div>
<div class="t" style="left:258.40px;top:642.64px;width:80.20px;font-size:9px;line-height:9px;color:#222;transform:scaleX(0.904);transform-origin:50% 50%">Jamuna Warehouse</div>
<div class="t" style="left:432.74px;top:642.64px;width:108.53px;font-size:9px;line-height:9px;color:#222;transform:scaleX(0.834);transform-origin:50% 50%">S. L. BASIN MIXER LUCID</div>
<div class="t" style="left:567.99px;top:642.64px;width:44.02px;font-size:9px;line-height:9px;color:#222;transform:scaleX(0.889);transform-origin:50% 50%">SM 7301-6</div>
<div class="t" style="left:660.00px;top:642.64px;width:5.00px;font-size:9px;line-height:9px;color:#222;transform:scaleX(0.920);transform-origin:50% 50%">2</div>
<div class="t" style="left:733.00px;top:642.64px;width:5.00px;font-size:9px;line-height:9px;color:#222;transform:scaleX(0.920);transform-origin:50% 50%">0</div>
<div class="t" style="left:796.25px;top:642.64px;width:13.50px;font-size:9px;line-height:9px;color:#222;transform:scaleX(0.820);transform-origin:50% 50%">NO</div>
<div class="t" style="left:932.49px;top:642.64px;width:82.02px;font-size:9px;line-height:9px;color:#222;transform:scaleX(0.826);transform-origin:50% 50%">RETURN_RECEIVE</div>
<div class="t" style="left:1048.24px;top:642.64px;width:30.51px;font-size:9px;line-height:9px;color:#222;transform:scaleX(0.900);transform-origin:50% 50%">Scratch</div>
<div class="t" style="left:1117.99px;top:642.64px;width:25.02px;font-size:9px;line-height:9px;color:#222;transform:scaleX(0.920);transform-origin:50% 50%">opu19</div>
<div class="t" style="left:1183.98px;top:637.44px;width:46.03px;font-size:9px;line-height:9px;color:#222;transform:scaleX(0.920);transform-origin:50% 50%">2026-04-18</div>
<div class="t" style="left:1189.49px;top:647.85px;width:35.03px;font-size:9px;line-height:9px;color:#222;transform:scaleX(0.920);transform-origin:50% 50%">13:55:03</div>
<div class="a" style="left:174px;top:684px;width:1072px;height:1px;background:#a6a6a6"></div>
<div class="t" style="left:258.40px;top:668.47px;width:80.20px;font-size:9px;line-height:9px;color:#222;transform:scaleX(0.904);transform-origin:50% 50%">Jamuna Warehouse</div>
<div class="t" style="left:447.48px;top:668.47px;width:79.04px;font-size:9px;line-height:9px;color:#222;transform:scaleX(0.897);transform-origin:50% 50%">Hand Shower Black</div>
<div class="t" style="left:567.99px;top:668.47px;width:44.02px;font-size:9px;line-height:9px;color:#222;transform:scaleX(0.889);transform-origin:50% 50%">SM 7270-4</div>
<div class="t" style="left:660.00px;top:668.47px;width:5.00px;font-size:9px;line-height:9px;color:#222;transform:scaleX(0.920);transform-origin:50% 50%">1</div>
<div class="t" style="left:733.00px;top:668.47px;width:5.00px;font-size:9px;line-height:9px;color:#222;transform:scaleX(0.920);transform-origin:50% 50%">0</div>
<div class="t" style="left:796.25px;top:668.47px;width:13.50px;font-size:9px;line-height:9px;color:#222;transform:scaleX(0.820);transform-origin:50% 50%">NO</div>
<div class="t" style="left:932.49px;top:668.47px;width:82.02px;font-size:9px;line-height:9px;color:#222;transform:scaleX(0.826);transform-origin:50% 50%">RETURN_RECEIVE</div>
<div class="t" style="left:1048.24px;top:668.47px;width:30.51px;font-size:9px;line-height:9px;color:#222;transform:scaleX(0.900);transform-origin:50% 50%">Scratch</div>
<div class="t" style="left:1117.99px;top:668.47px;width:25.02px;font-size:9px;line-height:9px;color:#222;transform:scaleX(0.920);transform-origin:50% 50%">opu19</div>
<div class="t" style="left:1183.98px;top:663.27px;width:46.03px;font-size:9px;line-height:9px;color:#222;transform:scaleX(0.920);transform-origin:50% 50%">2026-04-18</div>
<div class="t" style="left:1189.49px;top:673.67px;width:35.03px;font-size:9px;line-height:9px;color:#222;transform:scaleX(0.920);transform-origin:50% 50%">13:55:03</div>
<div class="a" style="left:174px;top:685px;width:1072px;height:26px;background:#f7f7f7"></div>
<div class="a" style="left:174px;top:710px;width:1072px;height:1px;background:#a6a6a6"></div>
<div class="t" style="left:260.15px;top:694.30px;width:76.70px;font-size:9px;line-height:9px;color:#222;transform:scaleX(0.901);transform-origin:50% 50%">Padma Warehouse</div>
<div class="t" style="left:426.72px;top:687.00px;width:120.55px;font-size:9px;line-height:9px;color:#222;transform:scaleX(0.832);transform-origin:50% 50%">LUMINA SHOWER SPOUT 6&quot;</div>
<div class="t" style="left:484.00px;top:699.50px;width:6.00px;font-size:9px;line-height:9px;color:#222;transform:scaleX(0.820);transform-origin:50% 50%">X</div>
<div class="t" style="left:571.99px;top:694.30px;width:36.02px;font-size:9px;line-height:9px;color:#222;transform:scaleX(0.883);transform-origin:50% 50%">SM 7261</div>
<div class="t" style="left:660.00px;top:694.30px;width:5.00px;font-size:9px;line-height:9px;color:#222;transform:scaleX(0.920);transform-origin:50% 50%">1</div>
<div class="t" style="left:733.00px;top:694.30px;width:5.00px;font-size:9px;line-height:9px;color:#222;transform:scaleX(0.920);transform-origin:50% 50%">0</div>
<div class="t" style="left:796.25px;top:694.30px;width:13.50px;font-size:9px;line-height:9px;color:#222;transform:scaleX(0.820);transform-origin:50% 50%">NO</div>
<div class="t" style="left:932.49px;top:694.30px;width:82.02px;font-size:9px;line-height:9px;color:#222;transform:scaleX(0.826);transform-origin:50% 50%">RETURN_RECEIVE</div>
<div class="t" style="left:1048.24px;top:694.30px;width:30.51px;font-size:9px;line-height:9px;color:#222;transform:scaleX(0.900);transform-origin:50% 50%">Scratch</div>
<div class="t" style="left:1117.99px;top:694.30px;width:25.02px;font-size:9px;line-height:9px;color:#222;transform:scaleX(0.920);transform-origin:50% 50%">opu19</div>
<div class="t" style="left:1183.98px;top:689.10px;width:46.03px;font-size:9px;line-height:9px;color:#222;transform:scaleX(0.920);transform-origin:50% 50%">2026-04-18</div>
<div class="t" style="left:1189.49px;top:699.50px;width:35.03px;font-size:9px;line-height:9px;color:#222;transform:scaleX(0.920);transform-origin:50% 50%">13:55:03</div>
<div class="a" style="left:174px;top:348.6px;width:1px;height:342.4px;background:#a6a6a6"></div>
<div class="a" style="left:251px;top:348.6px;width:1px;height:342.4px;background:#a6a6a6"></div>
<div class="a" style="left:346px;top:348.6px;width:1px;height:342.4px;background:#a6a6a6"></div>
<div class="a" style="left:420px;top:348.6px;width:1px;height:342.4px;background:#a6a6a6"></div>
<div class="a" style="left:554px;top:348.6px;width:1px;height:342.4px;background:#a6a6a6"></div>
<div class="a" style="left:626px;top:348.6px;width:1px;height:342.4px;background:#a6a6a6"></div>
<div class="a" style="left:699px;top:348.6px;width:1px;height:342.4px;background:#a6a6a6"></div>
<div class="a" style="left:772px;top:348.6px;width:1px;height:342.4px;background:#a6a6a6"></div>
<div class="a" style="left:834px;top:348.6px;width:1px;height:342.4px;background:#a6a6a6"></div>
<div class="a" style="left:913px;top:348.6px;width:1px;height:342.4px;background:#a6a6a6"></div>
<div class="a" style="left:1034px;top:348.6px;width:1px;height:342.4px;background:#a6a6a6"></div>
<div class="a" style="left:1093px;top:348.6px;width:1px;height:342.4px;background:#a6a6a6"></div>
<div class="a" style="left:1168px;top:348.6px;width:1px;height:342.4px;background:#a6a6a6"></div>
<div class="a" style="left:1246px;top:348.6px;width:1px;height:342.4px;background:#a6a6a6"></div>
<div class="a" style="left:101px;top:303px;width:1px;height:388px;background:#a6a6a6"></div>
<div class="a" style="left:422.9px;top:147.9px;width:47.3px;height:27.9px;background:#fffcd2;box-shadow:3px 3px 3px rgba(0,0,0,0.45)"></div>
<div class="t" style="left:439px;top:156px;font-size:14.5px;color:#111;line-height:14px">2.</div>
<div class="a" style="left:657.2px;top:222.3px;width:394.3px;height:62.7px;background:#fffbd0;border:1px solid #6b6b6b;box-shadow:3px 3px 4px rgba(0,0,0,0.45)"></div>
<div class="t" style="left:674.5px;top:230.3px;font-size:14.5px;color:#111;line-height:15px">Preview button asbe</div>
<div class="t" style="left:674px;top:264px;font-size:14.5px;color:#111;line-height:15px">Othoba , Menual Entry Preview er moto jeno dekte pare</div>
<svg style="left:0;top:0;filter:drop-shadow(2px 2px 1.5px rgba(0,0,0,0.35))" width="1366" height="768" viewBox="0 0 1366 768"><line x1="656.1" y1="257.9" x2="386.7" y2="222.85000000000002" stroke="#e8262c" stroke-width="1.3"/><path d="M368.1 220.2 L387.7 217.3 L385.7 228.4 Z" fill="#ff0000" stroke="#b00" stroke-width="0.8" stroke-linejoin="round"/><line x1="656.1" y1="257.9" x2="249.7" y2="333.85" stroke="#e8262c" stroke-width="1.3"/><path d="M231.1 336.4 L248.7 328.4 L250.7 339.3 Z" fill="#ff0000" stroke="#b00" stroke-width="0.8" stroke-linejoin="round"/><line x1="1050.9" y1="252.7" x2="1228.2" y2="322.8" stroke="#e8262c" stroke-width="1.3"/><path d="M1244.9 328.3 L1230 317.6 L1226.4 328 Z" fill="#ff0000" stroke="#b00" stroke-width="0.8" stroke-linejoin="round"/><line x1="421.8" y1="160.8" x2="422.05" y2="170.4" stroke="#e8262c" stroke-width="1.3"/><path d="M419.3 187.2 L416.5 169.3 L427.6 171.5 Z" fill="#ff0000" stroke="#b00" stroke-width="0.8" stroke-linejoin="round"/></svg>
<svg style="left:0;top:0;filter:drop-shadow(1.5px 1.5px 1px rgba(0,0,0,0.35))" width="1366" height="768" viewBox="0 0 1366 768"><circle cx="656.1" cy="257.9" r="4.7" fill="#ff0000" stroke="#b00" stroke-width="0.6"/><circle cx="1050.9" cy="252.7" r="4.7" fill="#ff0000" stroke="#b00" stroke-width="0.6"/><circle cx="421.8" cy="160.8" r="4.9" fill="#ff0000" stroke="#b00" stroke-width="0.6"/></svg>
<div class="a" style="left:92px;top:691px;width:1181px;height:37px;background:#eeeeee;border-top:1px solid #e0e0e0"></div>
<div class="a" style="left:0px;top:728px;width:1366px;height:40px;background:linear-gradient(90deg,#29261f 0,#2a2721 760px,#323232 800px,#343434 950px,#2e2c29 1060px,#28251f 1140px,#28251f 1366px)"></div>
<svg style="left:469.0px;top:699.5px;" width="20" height="20" viewBox="0 0 20 20"><rect x="1" y="1" width="8.5" height="8.5" fill="#1e88e5"/><rect x="10.5" y="1" width="8.5" height="8.5" fill="#29a8f0"/><rect x="1" y="10.5" width="8.5" height="8.5" fill="#1976d2"/><rect x="10.5" y="10.5" width="8.5" height="8.5" fill="#1e90e8"/></svg>
<svg style="left:503.6px;top:699.5px;" width="20" height="20" viewBox="0 0 20 20"><rect x="4" y="1" width="15" height="18" rx="2" fill="#185abd"/><rect x="10" y="5" width="9" height="10" fill="#2b7cd3"/><rect x="1" y="5" width="11" height="10" rx="1.5" fill="#1a4fa5"/><text x="2.5" y="13" font-size="8" font-weight="bold" fill="#fff" font-family="Liberation Sans">W</text></svg>
<svg style="left:537.5px;top:699.5px;" width="20" height="20" viewBox="0 0 20 20"><defs><linearGradient id="cpa" x1="0" y1="0" x2="0" y2="1"><stop offset="0" stop-color="#1d6fe0"/><stop offset="1" stop-color="#5cc33a"/></linearGradient><linearGradient id="cpb" x1="0" y1="0" x2="0" y2="1"><stop offset="0" stop-color="#c64fe0"/><stop offset="1" stop-color="#f25a2a"/></linearGradient></defs><path d="M5.5 2 H12.5 L8.5 14 H3.5 C2 14 1.2 13 1.5 11.5 L3.7 4 C4 2.8 4.6 2 5.5 2 Z" fill="url(#cpa)"/><path d="M14.5 18 H7.5 L11.5 6 H16.5 C18 6 18.8 7 18.5 8.5 L16.3 16 C16 17.2 15.4 18 14.5 18 Z" fill="url(#cpb)"/></svg>
<svg style="left:571.3px;top:699.5px;" width="20" height="20" viewBox="0 0 20 20"><path d="M1 3 H8 L10 5 H19 V18 H1 Z" fill="#f0b429"/><rect x="1" y="6" width="18" height="12" fill="#fcd05c"/><rect x="4" y="12" width="12" height="4" fill="#1e6fd0"/></svg>
<div class="a" style="left:578px;top:722.2px;width:6px;height:1.6px;background:#777;border-radius:1px"></div>
<svg style="left:605.0px;top:699.5px;" width="20" height="20" viewBox="0 0 20 20"><circle cx="10" cy="10" r="9" fill="#1576cc"/><path d="M10 1 A9 9 0 0 1 19 10.5 L13 12 L9 6 Z" fill="#3cc98a"/><path d="M3 14 A9 9 0 0 0 17 16 C14 17 11 16.5 9.5 14 Z" fill="#0d4f9a"/><ellipse cx="12.2" cy="11.8" rx="3.4" ry="2.9" fill="#fff"/></svg>
<div class="a" style="left:612px;top:722.2px;width:6px;height:1.6px;background:#777;border-radius:1px"></div>
<svg style="left:639.0px;top:699.5px;" width="20" height="20" viewBox="0 0 20 20"><path d="M2 5 H18 V17 C18 18 17 19 16 19 H4 C3 19 2 18 2 17 Z" fill="#1f5fa8"/><path d="M6 5 C6 1 14 1 14 5" fill="none" stroke="#3b82d6" stroke-width="1.5"/><rect x="7" y="9" width="2.8" height="2.8" fill="#f35325"/><rect x="10.2" y="9" width="2.8" height="2.8" fill="#81bc06"/><rect x="7" y="12.2" width="2.8" height="2.8" fill="#05a6f0"/><rect x="10.2" y="12.2" width="2.8" height="2.8" fill="#ffba08"/></svg>
<svg style="left:673.0px;top:699.5px;" width="20" height="20" viewBox="0 0 20 20"><circle cx="10" cy="10" r="8.5" fill="none" stroke="#1565c0" stroke-width="2"/><path d="M6 13 C8 9 10 7 14 6 C12 9 10 11 6 13 Z" fill="#1565c0"/><path d="M7 7 A4 4 0 0 1 13 12" fill="none" stroke="#5c9ce6" stroke-width="1.4"/></svg>
<svg style="left:706.4px;top:699.5px;" width="20" height="20" viewBox="0 0 20 20"><circle cx="10" cy="11" r="8.5" fill="#ff6a2b"/><path d="M4 6 C7 1 14 1 17 6 C15 4 12 4 11 5 Z" fill="#ffbd2e"/><circle cx="10.5" cy="11" r="4.2" fill="#7b3fd1"/><path d="M2 10 C2 15 6 19 10 19 C5 17 4 13 6 9 Z" fill="#e8332b"/></svg>
<svg style="left:740.6px;top:699.5px;" width="20" height="20" viewBox="0 0 20 20"><rect x="5" y="2" width="14" height="16" rx="1.5" fill="#21a366"/><rect x="12" y="2" width="7" height="16" fill="#33c481"/><rect x="5" y="10" width="14" height="8" fill="#107c41"/><rect x="1" y="5" width="10" height="10" rx="1.5" fill="#185c37"/><text x="3" y="13" font-size="8" font-weight="bold" fill="#fff" font-family="Liberation Sans">X</text></svg>
<div class="a" style="left:747.6px;top:722.2px;width:6px;height:1.6px;background:#777;border-radius:1px"></div>
<div class="a" style="left:770px;top:696px;width:29px;height:27px;background:#f7f7f7;border-radius:4px"></div>
<svg style="left:774.6px;top:699.5px;" width="20" height="20" viewBox="0 0 20 20"><circle cx="10" cy="10" r="9" fill="#db4437"/><path d="M10 10 L2.2 5.5 A9 9 0 0 0 10 19 Z" fill="#0f9d58"/><path d="M10 10 L10 19 A9 9 0 0 0 17.8 5.5 Z" fill="#ffcd40"/><circle cx="10" cy="10" r="4.3" fill="#fff"/><circle cx="10" cy="10" r="3.3" fill="#4285f4"/></svg>
<div class="a" style="left:778.7px;top:722px;width:12px;height:2px;background:#1b6ed6;border-radius:1px"></div>
<svg style="left:808.3px;top:699.5px;" width="20" height="20" viewBox="0 0 20 20"><rect x="2" y="2" width="16" height="16" rx="1" fill="#2e2e2e"/><path d="M11 17 L17 11 V17 Z" fill="#f5d514"/></svg>
<div class="a" style="left:815.3px;top:722.2px;width:6px;height:1.6px;background:#777;border-radius:1px"></div>
<svg style="left:841.7px;top:699.5px;" width="20" height="20" viewBox="0 0 20 20"><path d="M10 2 A8 8 0 1 1 4.5 16 L2 18 L3 14 A8 8 0 0 1 10 2 Z" fill="none" stroke="#25a244" stroke-width="2"/><path d="M7 7 C7 10 10 13 13 13 L14 11.5 L12 10.5 L11 11.5 C10 11 9 10 8.5 9 L9.5 8 L8.5 6 Z" fill="#25a244"/></svg>
<svg style="left:852.7px;top:696.7px;" width="12" height="12" viewBox="0 0 12 12"><circle cx="6" cy="6" r="5.8" fill="#1e6fd9"/><text x="3.6" y="9" font-size="8" fill="#fff" font-family="Liberation Sans">7</text></svg>
<div class="a" style="left:848.7px;top:722.2px;width:6px;height:1.6px;background:#777;border-radius:1px"></div>
<svg style="left:876.0px;top:699.5px;" width="20" height="20" viewBox="0 0 20 20"><rect x="1" y="1" width="18" height="18" fill="#ef443b"/><path d="M3.5 10 L7.5 6 L11.5 10 L7.5 14 Z" fill="#fff"/><path d="M12.5 6.5 L16 10 L12.5 13.5" fill="none" stroke="#fff" stroke-width="1.6"/></svg>
<div class="a" style="left:883px;top:722.2px;width:6px;height:1.6px;background:#777;border-radius:1px"></div>
<svg style="left:1127px;top:706px;" width="10" height="6" viewBox="0 0 10 6"><path d="M1 5 L5 1 L9 5" fill="none" stroke="#222" stroke-width="1.2"/></svg>
<svg style="left:1150px;top:703px;" width="14" height="12" viewBox="0 0 14 12"><path d="M1 4.5 C4.5 1 9.5 1 13 4.5 M3 6.8 C5.5 4.5 8.5 4.5 11 6.8 M5 9 C6 8 8 8 9 9" fill="none" stroke="#222" stroke-width="1.1"/><circle cx="7" cy="10.8" r="1" fill="#222"/></svg>
<svg style="left:1168px;top:703px;" width="15" height="13" viewBox="0 0 15 13"><path d="M1 4.5 H4 L7.5 1.5 V11.5 L4 8.5 H1 Z" fill="none" stroke="#222" stroke-width="1.1"/><path d="M9.5 4.5 C10.5 5.5 10.5 7.5 9.5 8.5 M11.5 3 C13 4.5 13 8.5 11.5 10 M13.3 1.5 C15.3 3.5 15.3 9.5 13.3 11.5" fill="none" stroke="#222" stroke-width="1"/></svg>
<svg style="left:1187px;top:705px;" width="17" height="9" viewBox="0 0 17 9"><rect x="0.6" y="0.6" width="14" height="7.8" rx="2" fill="#e8a21a" stroke="#555" stroke-width="0.9"/><rect x="15" y="2.8" width="1.5" height="3.4" fill="#555"/></svg>
<div class="t" style="left:1209px;top:698.5px;font-size:9.5px;color:#222;line-height:10px;width:48px;text-align:right">10:51 AM</div>
<div class="t" style="left:1209px;top:710.5px;font-size:9.5px;color:#222;line-height:10px;width:48.5px;text-align:right">4/21/2026</div>
<svg style="left:12.0px;top:736.0px;" width="24" height="24" viewBox="0 0 24 24"><path d="M3 5 L10.5 4 V11.5 H3 Z M11.5 3.8 L21 2.5 V11.5 H11.5 Z M3 12.5 H10.5 V20 L3 19 Z M11.5 12.5 H21 V21.5 L11.5 20.2 Z" fill="#fff"/></svg>
<svg style="left:60.0px;top:736.0px;" width="24" height="24" viewBox="0 0 24 24"><circle cx="14" cy="9.5" r="6.5" fill="none" stroke="#fff" stroke-width="2"/><path d="M9.5 14 L3 20.5" stroke="#fff" stroke-width="2.2" stroke-linecap="round"/></svg>
<svg style="left:111.0px;top:736.0px;" width="24" height="24" viewBox="0 0 24 24"><defs><linearGradient id="lcpa" x1="0" y1="0" x2="0" y2="1"><stop offset="0" stop-color="#1d6fe0"/><stop offset="1" stop-color="#5cc33a"/></linearGradient><linearGradient id="lcpb" x1="0" y1="0" x2="0" y2="1"><stop offset="0" stop-color="#c64fe0"/><stop offset="1" stop-color="#f25a2a"/></linearGradient></defs><path d="M7 2.5 H15 L10.5 16.5 H4.5 C2.7 16.5 1.8 15.3 2.2 13.6 L4.8 5 C5.2 3.5 5.9 2.5 7 2.5 Z" fill="url(#lcpa)"/><path d="M17 21.5 H9 L13.5 7.5 H19.5 C21.3 7.5 22.2 8.7 21.8 10.4 L19.2 19 C18.8 20.5 18.1 21.5 17 21.5 Z" fill="url(#lcpb)"/></svg>
<svg style="left:159.3px;top:736.0px;" width="24" height="24" viewBox="0 0 24 24"><rect x="2" y="2" width="20" height="20" rx="2" fill="#e0583b"/><rect x="2" y="2" width="20" height="10" rx="2" fill="#f0a050"/><path d="M7 8 C10 5 16 6 15 11 C14 15 9 15 9 12 M15 11 C17 14 17 18 14 20" fill="none" stroke="#3a1010" stroke-width="1.8"/></svg>
<svg style="left:208.0px;top:736.0px;" width="24" height="24" viewBox="0 0 24 24"><path d="M5 4 L19 3 L20 20 L4 21 Z" fill="#8fd0e8"/><path d="M5 4 L19 3 L19 7 L5 8 Z" fill="#c8eef8"/><path d="M4 21 L20 20 L18 16 Z" fill="#e8f6fa"/></svg>
<svg style="left:257.4px;top:736.0px;" width="24" height="24" viewBox="0 0 24 24"><path d="M12 2.5 A9.5 9.5 0 1 1 5.5 19 L2.5 21 L3.8 16.5 A9.5 9.5 0 0 1 12 2.5 Z" fill="#fff" stroke="#9a9a9a" stroke-width="2.2"/><path d="M8.5 8 C8.5 12 12 15.5 16 15.5 L17 13.5 L14.5 12.5 L13.3 13.5 C12 13 11 12 10.5 10.8 L11.5 9.5 L10.5 7 Z" fill="#9a9a9a"/></svg>
<svg style="left:306.6px;top:736.0px;" width="24" height="24" viewBox="0 0 24 24"><rect x="2" y="3" width="20" height="19" rx="2" fill="#f4f4f4"/><path d="M3 18 C5 9 9 5 15 4 L12 21 Z" fill="#1aa04a"/><path d="M12 6 C16 6 20 9 21 14 L15 20 Z" fill="#e02828"/></svg>
<svg style="left:355.5px;top:736.0px;" width="24" height="24" viewBox="0 0 24 24"><circle cx="12" cy="12" r="11" fill="#1666e8"/><text x="4" y="15.5" font-size="9.5" font-weight="bold" fill="#fff" font-family="Liberation Sans">zm</text></svg>
<svg style="left:405.0px;top:736.0px;" width="24" height="24" viewBox="0 0 24 24"><rect x="7" y="3" width="15" height="18" fill="#fff" opacity="0.95"/><path d="M10 6 H20 M10 10 H20 M10 14 H20 M10 18 H20 M14 4 V20" stroke="#1f7a45" stroke-width="1"/><path d="M1.5 3.5 L13 1.5 V22.5 L1.5 20.5 Z" fill="#1d7a44"/><text x="3.5" y="16" font-size="10" font-weight="bold" fill="#fff" font-family="Liberation Sans">X</text></svg>
<svg style="left:453.5px;top:736.0px;" width="24" height="24" viewBox="0 0 24 24"><rect x="7" y="3" width="15" height="18" fill="#fff"/><path d="M12 6 H20 M12 9 H20 M12 12 H20 M12 15 H20 M12 18 H20" stroke="#2b579a" stroke-width="1.2"/><path d="M1.5 3.5 L13 1.5 V22.5 L1.5 20.5 Z" fill="#2b579a"/><text x="2" y="16" font-size="9.5" font-weight="bold" fill="#fff" font-family="Liberation Sans">W</text></svg>
<svg style="left:502.5px;top:736.0px;" width="24" height="24" viewBox="0 0 24 24"><rect x="8" y="3" width="14" height="18" fill="#fff"/><path d="M14 8 L17 5 L20 8 L17 11 Z M14 12 H20 V18 H14 Z" fill="none" stroke="#3955a3" stroke-width="1"/><path d="M1.5 3.5 L13 1.5 V22.5 L1.5 20.5 Z" fill="#3955a3"/><text x="3.5" y="16" font-size="10" font-weight="bold" fill="#fff" font-family="Liberation Sans">V</text></svg>
<div class="a" style="left:540px;top:728px;width:48px;height:40px;background:#a45c2a"></div>
<div class="a" style="left:540px;top:766px;width:48px;height:2px;background:#f5802a"></div>
<svg style="left:552.0px;top:736.0px;" width="24" height="24" viewBox="0 0 24 24"><rect x="1" y="1" width="22" height="22" rx="2" fill="#fbd31a"/><path d="M11 23 L23 11 V21 C23 22 22 23 21 23 Z" fill="#222"/></svg>
<svg style="left:600.5px;top:736.0px;" width="24" height="24" viewBox="0 0 24 24"><rect x="1" y="1" width="22" height="22" fill="#e9f2f8"/><path d="M20 5 C16 2 5 3 5 8 C5 13 19 11 19 16 C19 21 8 21 4 18" fill="none" stroke="#3579b8" stroke-width="4"/></svg>
<div class="a" style="left:592.6px;top:766px;width:40.4px;height:2px;background:#7fb0e0"></div>
<svg style="left:649.7px;top:736.0px;" width="24" height="24" viewBox="0 0 24 24"><circle cx="12" cy="13" r="10" fill="#ff6a2b"/><path d="M4 8 C8 0 18 1 21 8 C18 5 14 5 13 6 Z" fill="#ffbd2e"/><circle cx="12.5" cy="13" r="5" fill="#7b3fd1"/><path d="M2 12 C2 18 7 23 12 23 C6 21 5 16 7 11 Z" fill="#e8332b"/></svg>
<div class="a" style="left:641.8px;top:766px;width:39.2px;height:2px;background:#7fb0e0"></div>
<svg style="left:699.0px;top:736.0px;" width="24" height="24" viewBox="0 0 24 24"><circle cx="11" cy="11" r="10" fill="#db4437"/><path d="M11 11 L2.3 6 A10 10 0 0 0 11 21 Z" fill="#0f9d58"/><path d="M11 11 L11 21 A10 10 0 0 0 19.7 6 Z" fill="#ffcd40"/><circle cx="11" cy="11" r="4.8" fill="#fff"/><circle cx="11" cy="11" r="3.7" fill="#4285f4"/><circle cx="17" cy="18" r="5.5" fill="#6b6b6b"/><circle cx="17" cy="16.5" r="2.5" fill="#e0d0c0"/></svg>
<div class="a" style="left:691px;top:766px;width:40px;height:2px;background:#7fb0e0"></div>
<div class="a" style="left:736.4px;top:728px;width:47.5px;height:40px;background:#494846"></div>
<svg style="left:747.5px;top:736.0px;" width="24" height="24" viewBox="0 0 24 24"><rect x="1" y="1" width="22" height="22" fill="#ef443b"/><path d="M4 12 L8.5 7.5 L13 12 L8.5 16.5 Z" fill="#fff"/><path d="M14.5 8 L18.5 12 L14.5 16" fill="none" stroke="#fff" stroke-width="1.8"/></svg>
<svg style="left:1158px;top:743px;" width="13" height="8" viewBox="0 0 13 8"><path d="M1 7 L6.5 1.5 L12 7" fill="none" stroke="#fff" stroke-width="1.3"/></svg>
<svg style="left:1180px;top:739px;" width="17" height="17" viewBox="0 0 17 17"><path d="M1.5 6 H5 L9 2 V15 L5 11 H1.5 Z" fill="none" stroke="#fff" stroke-width="1.2"/><path d="M11 6 C12 7 12 10 11 11 M13 4 C15 6 15 11 13 13 M15 2 C18 5 18 12 15 15" fill="none" stroke="#fff" stroke-width="1.1"/></svg>
<svg style="left:1206px;top:740px;" width="16" height="16" viewBox="0 0 16 16"><path d="M2 15 C2 8 8 2 15 2 M5 15 C5 10 10 5 15 5 M8 15 C8 11.5 11.5 8 15 8" fill="none" stroke="#fff" stroke-width="1.2"/><circle cx="13.5" cy="13.5" r="1.8" fill="#fff"/></svg>
<svg style="left:1229px;top:739px;" width="16" height="17" viewBox="0 0 16 17"><path d="M4 4 C6 1.5 10 1.5 12 4 M4 13 C6 15.5 10 15.5 12 13" fill="none" stroke="#fff" stroke-width="1"/><rect x="2" y="5.5" width="9" height="6" rx="1" fill="none" stroke="#fff" stroke-width="1.2"/><path d="M11 7.5 L14.5 5.5 V11.5 L11 9.5" fill="none" stroke="#fff" stroke-width="1.1"/></svg>
<div class="t" style="left:1250px;top:733px;font-size:11.5px;color:#fff;line-height:12px;width:62px;text-align:center">10:51 AM</div>
<div class="t" style="left:1250px;top:751px;font-size:11.5px;color:#fff;line-height:12px;width:62px;text-align:center">4/21/2026</div>
<svg style="left:1323px;top:737px;" width="22" height="24" viewBox="0 0 22 24"><path d="M1 1 H18 V14 H8 L5 17 V14 H1 Z" fill="#fff"/><path d="M4 4.5 H15 M4 7.5 H15 M4 10.5 H12" stroke="#222" stroke-width="1"/><circle cx="17.5" cy="18" r="7.2" fill="#2a2a2a" stroke="#8a8a8a" stroke-width="1.1"/><text x="14" y="22" font-size="11" font-weight="bold" fill="#fff" font-family="Liberation Sans">2</text></svg>
<div class="a" style="left:1361px;top:728px;width:1px;height:40px;background:#5a5752"></div>
</body></html>
